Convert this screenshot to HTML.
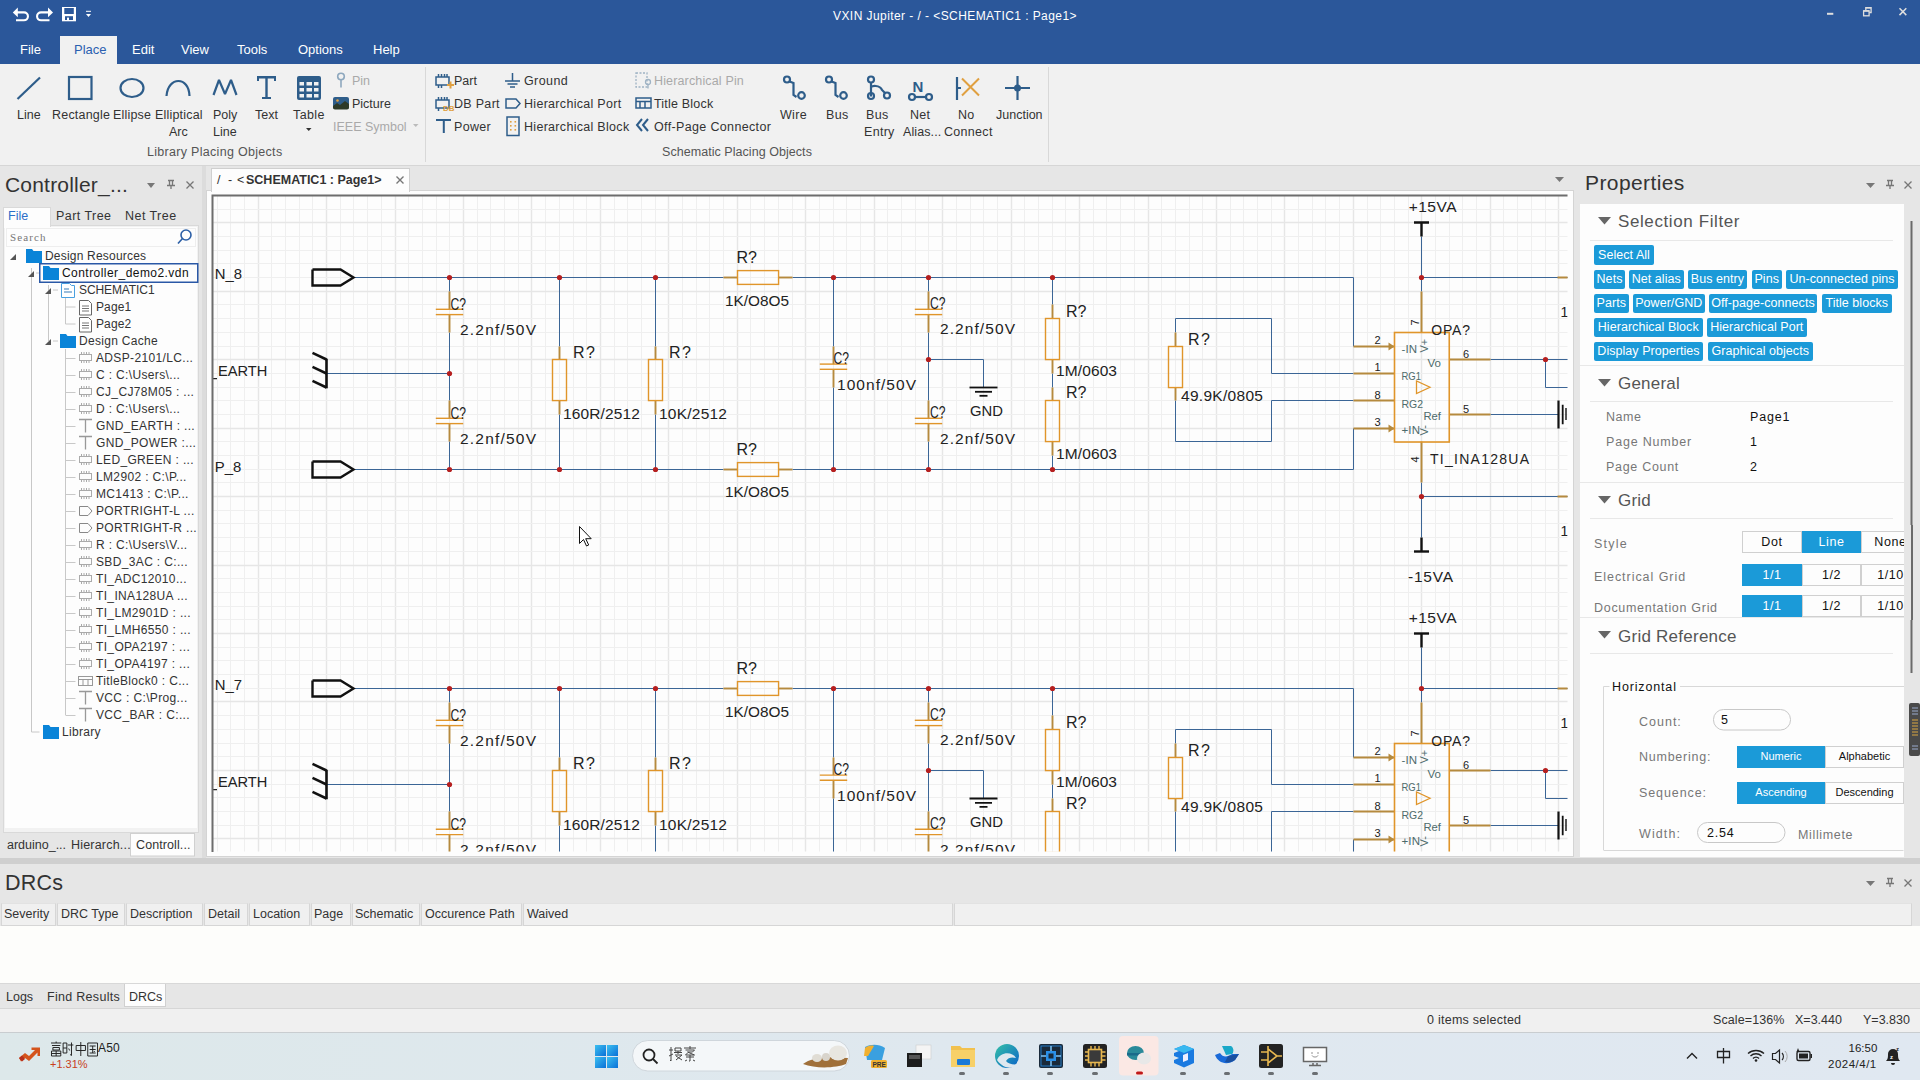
<!DOCTYPE html>
<html><head><meta charset="utf-8">
<style>
*{margin:0;padding:0;box-sizing:border-box}
html,body{width:1920px;height:1080px;overflow:hidden;background:#f0f0f0;font-family:"Liberation Sans",sans-serif;color:#222}
.a{position:absolute;white-space:nowrap}
#title{left:0;top:0;width:1920px;height:64px;background:#2b579a}
#ribbon{left:0;top:64px;width:1920px;height:102px;background:#f1f1f1;border-bottom:1px solid #d6d6d6}
#lp{left:0;top:166px;width:202px;height:692px;background:#e6e6e6}
#dp{left:202px;top:166px;width:1378px;height:692px;background:#e6e6e6}
#rp{left:1576px;top:166px;width:344px;height:692px;background:#e6e6e6}
#drc{left:0;top:863px;width:1920px;height:145px;background:#e6e6e6}
#status{left:0;top:1008px;width:1920px;height:24px;background:#f0f0f0}
#task{left:0;top:1032px;width:1920px;height:48px;background:#dde8f0}
</style></head><body>
<div id="title" class="a">
<svg class="a" style="left:0;top:0" width="120" height="32" viewBox="0 0 120 32">
 <g fill="none" stroke="#fff" stroke-width="2.1">
  <path d="M17 12.4H24A3.95 3.95 0 0 1 24 20.3H16"/>
  <path d="M48.5 12.4H41A3.95 3.95 0 0 0 41 20.3H49.5"/>
 </g>
 <path d="M12.8 12.4L17.8 7.6V17.2z" fill="#fff"/>
 <path d="M53 12.4L48 7.6V17.2z" fill="#fff"/>
 <rect x="62" y="7" width="14" height="14.3" fill="#fff"/>
 <rect x="64.3" y="8" width="9.5" height="6" fill="#2b579a"/>
 <rect x="65" y="16.2" width="8" height="3.8" fill="#2b579a"/>
 <rect x="67" y="17.6" width="2" height="2.4" fill="#fff"/>
 <rect x="86" y="10.8" width="5" height="1" fill="#fff"/>
 <path d="M86 14h5l-2.5 3z" fill="#fff"/>
</svg>
<div class="a" style="left:833px;top:8px;font-size:12px;letter-spacing:0.43px;color:#fff;line-height:16px">VXIN Jupiter - / - &lt;SCHEMATIC1 : Page1&gt;</div>
<svg class="a" style="left:1810px;top:0" width="110" height="32" viewBox="1810 0 110 32">
 <rect x="1827" y="12.8" width="6.3" height="2" fill="#dedede"/>
 <g fill="none" stroke="#dedede" stroke-width="1.3">
  <rect x="1863.6" y="10.8" width="5.5" height="5"/>
  <path d="M1865.8 10.5V7.6h5.3v4.9h-1.8"/>
  <path d="M1899.5 8.3l6.8 6.8M1906.3 8.3l-6.8 6.8" stroke-width="1.5"/>
 </g>
 <rect x="1865.8" y="7" width="5.3" height="1.6" fill="#dedede"/>
 <rect x="1863.6" y="10.2" width="5.5" height="1.5" fill="#dedede"/>
</svg>
<div class="a" style="left:60px;top:36px;width:57px;height:28px;background:#f1f1f1"></div>
<div class="a" style="left:20px;top:42px;font-size:13px;line-height:16px;color:#fff">File</div>
<div class="a" style="left:74px;top:42px;font-size:13px;line-height:16px;color:#2b5fb0">Place</div>
<div class="a" style="left:132px;top:42px;font-size:13px;line-height:16px;color:#fff">Edit</div>
<div class="a" style="left:181px;top:42px;font-size:13px;line-height:16px;color:#fff">View</div>
<div class="a" style="left:237px;top:42px;font-size:13px;line-height:16px;color:#fff">Tools</div>
<div class="a" style="left:298px;top:42px;font-size:13px;line-height:16px;color:#fff">Options</div>
<div class="a" style="left:373px;top:42px;font-size:13px;line-height:16px;color:#fff">Help</div>
</div>
<div id="ribbon" class="a">
<style>
.rl{position:absolute;font-size:12.5px;line-height:15px;color:#333;white-space:nowrap}
.rg{color:#a9a9a9}
.gl{position:absolute;font-size:12.5px;line-height:15px;color:#555;white-space:nowrap;letter-spacing:0.3px}
</style>
<svg class="a" style="left:0;top:0" width="1060" height="102" viewBox="0 64 1060 102">
 <g fill="none" stroke="#2e5d8a" stroke-width="2.2">
  <path d="M17.5 99 L40 77.5"/>
  <rect x="69" y="77" width="22.5" height="22"/>
  <ellipse cx="132" cy="88" rx="11.5" ry="9"/>
  <path d="M166.5 96 C168 76 189 76 189.5 96"/>
  <path d="M213.5 95 L219 80 L225 94 L231 80 L236.5 95" stroke-linejoin="bevel"/>
 </g>
 <g fill="#2e5d8a">
  <rect x="257" y="76" width="19" height="2.5"/>
  <rect x="257" y="76" width="2" height="5"/><rect x="274" y="76" width="2" height="5"/>
  <rect x="265.3" y="76" width="2.4" height="23"/>
  <rect x="262" y="97" width="9" height="2"/>
  <rect x="297" y="76" width="24" height="24" rx="2"/>
  <path d="M306 128h5.5l-2.75 3z" fill="#333"/>
 </g>
 <g fill="#f1f1f1">
  <rect x="299.5" y="82" width="4.5" height="3.5"/><rect x="306.5" y="82" width="5.5" height="3.5"/><rect x="314" y="82" width="4.5" height="3.5"/>
  <rect x="299.5" y="88" width="4.5" height="3.5"/><rect x="306.5" y="88" width="5.5" height="3.5"/><rect x="314" y="88" width="4.5" height="3.5"/>
  <rect x="299.5" y="94" width="4.5" height="3.5"/><rect x="306.5" y="94" width="5.5" height="3.5"/><rect x="314" y="94" width="4.5" height="3.5"/>
 </g>
 <g fill="none" stroke="#8ea8be" stroke-width="1.6"><circle cx="341" cy="76.5" r="3.3"/><path d="M341 80v7.5"/></g>
 <rect x="333" y="97" width="16" height="12" rx="2" fill="#2e5d8a"/>
 <path d="M333 106 l4-3 3 2 5-4 4 3v3.5a2 2 0 0 1-2 2h-12a2 2 0 0 1-2-2z" fill="#2d3a28"/>
 <circle cx="337.5" cy="100.5" r="1.3" fill="#e0a040"/>
 <path d="M413 124h5.5l-2.75 3z" fill="#bbb"/>
 <rect x="425" y="67" width="1" height="95" fill="#d8d8d8"/>
 <rect x="1048" y="67" width="1" height="95" fill="#d8d8d8"/>
 <!-- Part -->
 <g fill="none" stroke="#2e5d8a" stroke-width="1.5">
  <rect x="436" y="77" width="13" height="8"/>
  <path d="M438.5 77v-3M441.5 77v-3M444.5 77v-3M447 77v-3M438.5 85v3M441.5 85v3"/>
  <rect x="436" y="100" width="13" height="8"/>
  <path d="M438.5 100v-3M441.5 100v-3M444.5 100v-3M447 100v-3M438.5 108v3"/>
 </g>
 <path d="M447 84h2.5v-2.5h2v2.5h2.5v2h-2.5v2.5h-2v-2.5h-2.5z" fill="#e0a040"/>
 <text x="443" y="110.5" font-size="8" font-weight="bold" fill="#e0a040" font-family="Liberation Sans">DB</text>
 <g fill="#2e5d8a"><rect x="436" y="119" width="15" height="2"/><rect x="442.8" y="119" width="2" height="14"/></g>
 <!-- Ground -->
 <g fill="none" stroke="#2e5d8a" stroke-width="1.5">
  <path d="M512.5 73v8M505 81h15M507.5 84h10M510 87h5"/>
  <path d="M506 99h10l4 4.5-4 4.5h-10z"/>
  <rect x="507" y="117" width="12" height="18.5"/>
 </g>
 <g fill="#e0a040"><rect x="510" y="121" width="1.6" height="1.6"/><rect x="514.5" y="121" width="1.6" height="1.6"/><rect x="510" y="125" width="1.6" height="1.6"/><rect x="514.5" y="125" width="1.6" height="1.6"/><rect x="510" y="129" width="1.6" height="1.6"/><rect x="514.5" y="129" width="1.6" height="1.6"/></g>
 <!-- Hier pin -->
 <g fill="none" stroke="#9fb3c4" stroke-width="1.3">
  <rect x="636" y="73" width="11" height="14" stroke-dasharray="2 1.5"/>
  <circle cx="648" cy="82" r="2.5"/><path d="M648 84.5v4"/>
 </g>
 <g fill="none" stroke="#2e5d8a" stroke-width="1.5">
  <rect x="636" y="98" width="15" height="10"/>
  <path d="M636 101.5h15M640 101.5v6.5M645 101.5v6.5"/>
  <path d="M642 119l-5 6 5 6M648 119l-5 6 5 6" stroke-width="2"/>
 </g>
 <!-- Wire etc -->
 <g fill="none" stroke="#2e5d8a" stroke-width="2.2">
  <circle cx="787" cy="79.5" r="3"/><path d="M789.5 81.5l4 1.5v12l3 2"/><circle cx="801.5" cy="95.5" r="3.3"/>
  <circle cx="829" cy="79.5" r="3"/><path d="M831.5 81.5l4 1.5v12l3 2"/><circle cx="843.5" cy="95.5" r="3.3"/>
  <circle cx="871" cy="79.5" r="3"/><path d="M871 82.5v14M871 88c0-3 9-3 11 2l3 3"/><circle cx="871" cy="96" r="3"/><circle cx="887" cy="95.5" r="3"/>
  <circle cx="912" cy="97" r="3"/><circle cx="929" cy="97" r="3"/><path d="M915 97h11"/>
  <path d="M1017.5 76v24M1005 88h25"/>
 </g>
 <text x="912.5" y="91.5" font-size="15" font-weight="bold" fill="#2e5d8a" font-family="Liberation Sans">N</text>
 <path d="M957 77v23" stroke="#2e5d8a" stroke-width="2.2"/>
 <path d="M957 88h4" stroke="#2e5d8a" stroke-width="2"/>
 <path d="M962 78.5l17 17M979 78.5l-17 17" stroke="#e0a040" stroke-width="2"/>
 <circle cx="1017.5" cy="88" r="3.5" fill="#2e5d8a"/>
</svg>
<div class="rl" style="left:17px;top:44px">Line</div>
<div class="rl" style="left:52px;top:44px;letter-spacing:0.2px">Rectangle</div>
<div class="rl" style="left:113px;top:44px;letter-spacing:0.2px">Ellipse</div>
<div class="rl" style="left:155px;top:44px;letter-spacing:0.2px">Elliptical</div>
<div class="rl" style="left:169px;top:61px">Arc</div>
<div class="rl" style="left:213px;top:44px">Poly</div>
<div class="rl" style="left:213px;top:61px">Line</div>
<div class="rl" style="left:255px;top:44px">Text</div>
<div class="rl" style="left:293px;top:44px;letter-spacing:0.4px">Table</div>
<div class="rl rg" style="left:352px;top:10px">Pin</div>
<div class="rl" style="left:352px;top:33px">Picture</div>
<div class="rl rg" style="left:333px;top:56px">IEEE Symbol</div>
<div class="gl" style="left:147px;top:81px;letter-spacing:0.3px">Library Placing Objects</div>
<div class="rl" style="left:454px;top:10px">Part</div>
<div class="rl" style="left:454px;top:33px;letter-spacing:0.3px">DB Part</div>
<div class="rl" style="left:454px;top:56px;letter-spacing:0.3px">Power</div>
<div class="rl" style="left:524px;top:10px;letter-spacing:0.4px">Ground</div>
<div class="rl" style="left:524px;top:33px;letter-spacing:0.3px">Hierarchical Port</div>
<div class="rl" style="left:524px;top:56px;letter-spacing:0.3px">Hierarchical Block</div>
<div class="rl rg" style="left:654px;top:10px;letter-spacing:0.15px">Hierarchical Pin</div>
<div class="rl" style="left:654px;top:33px;letter-spacing:0.2px">Title Block</div>
<div class="rl" style="left:654px;top:56px;letter-spacing:0.35px">Off-Page Connector</div>
<div class="rl" style="left:780px;top:44px;letter-spacing:0.3px">Wire</div>
<div class="rl" style="left:826px;top:44px;letter-spacing:0.3px">Bus</div>
<div class="rl" style="left:866px;top:44px;letter-spacing:0.3px">Bus</div>
<div class="rl" style="left:864px;top:61px;letter-spacing:0.3px">Entry</div>
<div class="rl" style="left:910px;top:44px;letter-spacing:0.3px">Net</div>
<div class="rl" style="left:903px;top:61px;letter-spacing:0.1px">Alias...</div>
<div class="rl" style="left:958px;top:44px;letter-spacing:0.3px">No</div>
<div class="rl" style="left:944px;top:61px;letter-spacing:0.3px">Connect</div>
<div class="rl" style="left:996px;top:44px">Junction</div>
<div class="gl" style="left:662px;top:81px;letter-spacing:0.05px">Schematic Placing Objects</div>
</div>
<div id="lp" class="a">
<style>.tr{position:absolute;font-size:12px;line-height:14px;letter-spacing:0.35px;color:#333;white-space:nowrap}</style>
<div class="a" style="left:0;top:-166px;width:1px;height:1px">
<div class="a" style="left:5px;top:172px;font-size:21px;line-height:26px;color:#333;letter-spacing:0.2px">Controller_...</div>
<svg class="a" style="left:0;top:166px" width="202" height="696" viewBox="0 166 202 696">
 <path d="M147 183h8l-4 5z" fill="#777"/>
 <g fill="none" stroke="#777" stroke-width="1.3"><path d="M168 180.5h6M169.5 180.5v5h3v-5M167 185.5h8M171 185.5v3.5"/><path d="M186.5 181.5l7 7M193.5 181.5l-7 7"/></g>
 <rect x="3.5" y="225.5" width="195" height="607" fill="#f2f2f2" stroke="#d9d9d9"/>
 <rect x="5" y="227" width="192" height="601" fill="#fdfdfd"/>
 <rect x="3.5" y="207.5" width="47" height="19" fill="#fdfdfd" stroke="#d9d9d9"/>
 <rect x="4" y="225" width="46" height="3" fill="#fdfdfd"/>
 <rect x="6.5" y="228.5" width="189" height="18" fill="#fdfdfd" stroke="#eeeeee"/>
 <g fill="none" stroke="#2c5fa6" stroke-width="1.6"><circle cx="186" cy="235" r="5"/><path d="M182.5 238.5l-4.5 5"/></g>
 <rect x="39.75" y="263.75" width="158" height="18.5" fill="none" stroke="#2a58a6" stroke-width="1.5"/>
 <g stroke="#c8c8c8" stroke-width="1" fill="none"><path d="M31.5 268v464M31.5 732h8"/><path d="M48.5 285v56"/><path d="M65.5 297v27h10M65.5 307h10"/><path d="M65.5 349v366"/><path d="M65.5 358.5h10"/><path d="M65.5 375.5h10"/><path d="M65.5 392.5h10"/><path d="M65.5 409.5h10"/><path d="M65.5 426.5h10"/><path d="M65.5 443.5h10"/><path d="M65.5 460.5h10"/><path d="M65.5 477.5h10"/><path d="M65.5 494.5h10"/><path d="M65.5 511.5h10"/><path d="M65.5 528.5h10"/><path d="M65.5 545.5h10"/><path d="M65.5 562.5h10"/><path d="M65.5 579.5h10"/><path d="M65.5 596.5h10"/><path d="M65.5 613.5h10"/><path d="M65.5 630.5h10"/><path d="M65.5 647.5h10"/><path d="M65.5 664.5h10"/><path d="M65.5 681.5h10"/><path d="M65.5 698.5h10"/><path d="M65.5 715.5h10"/><path d="M36 273h3M53 290h5M53 341h5"/></g><path d="M16 254v6h-6z" fill="#555"/><path d="M34 271v6h-6z" fill="#555"/><path d="M51 288v6h-6z" fill="#555"/><path d="M51 339v6h-6z" fill="#555"/><path d="M26 249h6l1.5 2h8.5v12h-16z" fill="#0a84d8"/><path d="M43 266h6l1.5 2h8.5v12h-16z" fill="#0a84d8"/><path d="M60 334h6l1.5 2h8.5v12h-16z" fill="#0a84d8"/><path d="M43 725h6l1.5 2h8.5v12h-16z" fill="#0a84d8"/><path d="M61.5 283.5h8l2 2h3v12h-13z" fill="#fff" stroke="#4aa0e0" stroke-width="1"/><path d="M64 289h5M64 292h8" stroke="#7aa8d0" stroke-width="1.3"/><path d="M79.5 300.5h9l3 3v11.5h-12z" fill="#fff" stroke="#666" stroke-width="1"/><path d="M82 306h7M82 308.5h7M82 311h7" stroke="#666" stroke-width="0.9"/><path d="M79.5 317.5h9l3 3v11.5h-12z" fill="#fff" stroke="#666" stroke-width="1"/><path d="M82 323h7M82 325.5h7M82 328h7" stroke="#666" stroke-width="0.9"/><g stroke="#aaa" stroke-width="1" fill="none"><rect x="79.5" y="354.5" width="12" height="6"/><path d="M81.5 354.5v-2.5M84 354.5v-2.5M86.5 354.5v-2.5M89 354.5v-2.5M81.5 360.5v2.5M84 360.5v2.5M86.5 360.5v2.5M89 360.5v2.5"/></g><g stroke="#aaa" stroke-width="1" fill="none"><rect x="79.5" y="371.5" width="12" height="6"/><path d="M81.5 371.5v-2.5M84 371.5v-2.5M86.5 371.5v-2.5M89 371.5v-2.5M81.5 377.5v2.5M84 377.5v2.5M86.5 377.5v2.5M89 377.5v2.5"/></g><g stroke="#aaa" stroke-width="1" fill="none"><rect x="79.5" y="388.5" width="12" height="6"/><path d="M81.5 388.5v-2.5M84 388.5v-2.5M86.5 388.5v-2.5M89 388.5v-2.5M81.5 394.5v2.5M84 394.5v2.5M86.5 394.5v2.5M89 394.5v2.5"/></g><g stroke="#aaa" stroke-width="1" fill="none"><rect x="79.5" y="405.5" width="12" height="6"/><path d="M81.5 405.5v-2.5M84 405.5v-2.5M86.5 405.5v-2.5M89 405.5v-2.5M81.5 411.5v2.5M84 411.5v2.5M86.5 411.5v2.5M89 411.5v2.5"/></g><path d="M79 419.5h13M85.5 419.5v13" stroke="#999" stroke-width="1.3" fill="none"/><path d="M79 436.5h13M85.5 436.5v13" stroke="#999" stroke-width="1.3" fill="none"/><g stroke="#aaa" stroke-width="1" fill="none"><rect x="79.5" y="456.5" width="12" height="6"/><path d="M81.5 456.5v-2.5M84 456.5v-2.5M86.5 456.5v-2.5M89 456.5v-2.5M81.5 462.5v2.5M84 462.5v2.5M86.5 462.5v2.5M89 462.5v2.5"/></g><g stroke="#aaa" stroke-width="1" fill="none"><rect x="79.5" y="473.5" width="12" height="6"/><path d="M81.5 473.5v-2.5M84 473.5v-2.5M86.5 473.5v-2.5M89 473.5v-2.5M81.5 479.5v2.5M84 479.5v2.5M86.5 479.5v2.5M89 479.5v2.5"/></g><g stroke="#aaa" stroke-width="1" fill="none"><rect x="79.5" y="490.5" width="12" height="6"/><path d="M81.5 490.5v-2.5M84 490.5v-2.5M86.5 490.5v-2.5M89 490.5v-2.5M81.5 496.5v2.5M84 496.5v2.5M86.5 496.5v2.5M89 496.5v2.5"/></g><path d="M79.5 506.5h8.5l4 4.5-4 4.5h-8.5z" stroke="#888" stroke-width="1" fill="none"/><path d="M79.5 523.5h8.5l4 4.5-4 4.5h-8.5z" stroke="#888" stroke-width="1" fill="none"/><g stroke="#aaa" stroke-width="1" fill="none"><rect x="79.5" y="541.5" width="12" height="6"/><path d="M81.5 541.5v-2.5M84 541.5v-2.5M86.5 541.5v-2.5M89 541.5v-2.5M81.5 547.5v2.5M84 547.5v2.5M86.5 547.5v2.5M89 547.5v2.5"/></g><g stroke="#aaa" stroke-width="1" fill="none"><rect x="79.5" y="558.5" width="12" height="6"/><path d="M81.5 558.5v-2.5M84 558.5v-2.5M86.5 558.5v-2.5M89 558.5v-2.5M81.5 564.5v2.5M84 564.5v2.5M86.5 564.5v2.5M89 564.5v2.5"/></g><g stroke="#aaa" stroke-width="1" fill="none"><rect x="79.5" y="575.5" width="12" height="6"/><path d="M81.5 575.5v-2.5M84 575.5v-2.5M86.5 575.5v-2.5M89 575.5v-2.5M81.5 581.5v2.5M84 581.5v2.5M86.5 581.5v2.5M89 581.5v2.5"/></g><g stroke="#aaa" stroke-width="1" fill="none"><rect x="79.5" y="592.5" width="12" height="6"/><path d="M81.5 592.5v-2.5M84 592.5v-2.5M86.5 592.5v-2.5M89 592.5v-2.5M81.5 598.5v2.5M84 598.5v2.5M86.5 598.5v2.5M89 598.5v2.5"/></g><g stroke="#aaa" stroke-width="1" fill="none"><rect x="79.5" y="609.5" width="12" height="6"/><path d="M81.5 609.5v-2.5M84 609.5v-2.5M86.5 609.5v-2.5M89 609.5v-2.5M81.5 615.5v2.5M84 615.5v2.5M86.5 615.5v2.5M89 615.5v2.5"/></g><g stroke="#aaa" stroke-width="1" fill="none"><rect x="79.5" y="626.5" width="12" height="6"/><path d="M81.5 626.5v-2.5M84 626.5v-2.5M86.5 626.5v-2.5M89 626.5v-2.5M81.5 632.5v2.5M84 632.5v2.5M86.5 632.5v2.5M89 632.5v2.5"/></g><g stroke="#aaa" stroke-width="1" fill="none"><rect x="79.5" y="643.5" width="12" height="6"/><path d="M81.5 643.5v-2.5M84 643.5v-2.5M86.5 643.5v-2.5M89 643.5v-2.5M81.5 649.5v2.5M84 649.5v2.5M86.5 649.5v2.5M89 649.5v2.5"/></g><g stroke="#aaa" stroke-width="1" fill="none"><rect x="79.5" y="660.5" width="12" height="6"/><path d="M81.5 660.5v-2.5M84 660.5v-2.5M86.5 660.5v-2.5M89 660.5v-2.5M81.5 666.5v2.5M84 666.5v2.5M86.5 666.5v2.5M89 666.5v2.5"/></g><g stroke="#999" stroke-width="1" fill="none"><rect x="78.5" y="676.5" width="14" height="9"/><path d="M78.5 679.5h14M83 679.5v6M88 679.5v6"/></g><path d="M79 691.5h13M85.5 691.5v13" stroke="#999" stroke-width="1.3" fill="none"/><path d="M79 708.5h13M85.5 708.5v13" stroke="#999" stroke-width="1.3" fill="none"/>
 <rect x="130.5" y="833.5" width="64" height="22.5" fill="#fdfdfd" stroke="#d0d0d0"/>
</svg>
<div class="a" style="left:8px;top:208px;font-size:12.5px;line-height:16px;color:#2b6fc8">File</div>
<div class="a" style="left:56px;top:208px;font-size:12.5px;line-height:16px;color:#333;letter-spacing:0.45px">Part Tree</div>
<div class="a" style="left:125px;top:208px;font-size:12.5px;line-height:16px;color:#333;letter-spacing:0.45px">Net Tree</div>
<div class="a" style="left:10px;top:230px;font-size:11px;line-height:14px;color:#777;letter-spacing:1.1px;font-family:'Liberation Serif',serif">Search</div>
<div class="tr" style="left:45px;top:249px;letter-spacing:0.2px">Design Resources</div>
<div class="tr" style="left:62px;top:266px;color:#111;letter-spacing:0.45px">Controller_demo2.vdn</div>
<div class="tr" style="left:79px;top:283px;letter-spacing:-0.1px">SCHEMATIC1</div>
<div class="tr" style="left:96px;top:300px;letter-spacing:0.1px">Page1</div>
<div class="tr" style="left:96px;top:317px;letter-spacing:0.1px">Page2</div>
<div class="tr" style="left:79px;top:334px;letter-spacing:0.3px">Design Cache</div>
<div class="tr" style="left:96px;top:351px">ADSP-2101/LC...</div><div class="tr" style="left:96px;top:368px">C : C:\Users\...</div><div class="tr" style="left:96px;top:385px">CJ_CJ78M05 : ...</div><div class="tr" style="left:96px;top:402px">D : C:\Users\...</div><div class="tr" style="left:96px;top:419px">GND_EARTH : ...</div><div class="tr" style="left:96px;top:436px">GND_POWER :...</div><div class="tr" style="left:96px;top:453px">LED_GREEN : ...</div><div class="tr" style="left:96px;top:470px">LM2902 : C:\P...</div><div class="tr" style="left:96px;top:487px">MC1413 : C:\P...</div><div class="tr" style="left:96px;top:504px">PORTRIGHT-L ...</div><div class="tr" style="left:96px;top:521px">PORTRIGHT-R ...</div><div class="tr" style="left:96px;top:538px">R : C:\Users\V...</div><div class="tr" style="left:96px;top:555px">SBD_3AC : C:...</div><div class="tr" style="left:96px;top:572px">TI_ADC12010...</div><div class="tr" style="left:96px;top:589px">TI_INA128UA ...</div><div class="tr" style="left:96px;top:606px">TI_LM2901D : ...</div><div class="tr" style="left:96px;top:623px">TI_LMH6550 : ...</div><div class="tr" style="left:96px;top:640px">TI_OPA2197 : ...</div><div class="tr" style="left:96px;top:657px">TI_OPA4197 : ...</div><div class="tr" style="left:96px;top:674px">TitleBlock0 : C...</div><div class="tr" style="left:96px;top:691px">VCC : C:\Prog...</div><div class="tr" style="left:96px;top:708px">VCC_BAR : C:...</div>
<div class="tr" style="left:62px;top:725px;letter-spacing:0.3px">Library</div>
<div class="a" style="left:7px;top:837px;font-size:12.5px;line-height:16px;color:#333">arduino_...</div>
<div class="a" style="left:71px;top:837px;font-size:12.5px;line-height:16px;color:#333;letter-spacing:0.2px">Hierarch...</div>
<div class="a" style="left:136px;top:837px;font-size:12.5px;line-height:16px;color:#333;letter-spacing:0.1px">Controll...</div>
</div></div>
<div id="dp" class="a"></div>
<div class="a" style="left:202px;top:166px;width:4px;height:692px;background:#dcdcdc"></div>
<div class="a" style="left:1576px;top:166px;width:4px;height:692px;background:#dcdcdc"></div>
<div class="a" style="left:206px;top:190px;width:1368px;height:667px;background:#fdfdfd;border:1px solid #d4d4d4"></div>
<div class="a" style="left:211px;top:168px;width:199px;height:24px;background:#fdfdfd;border:1px solid #cfcfcf;border-bottom:none"></div>
<div class="a" style="left:217px;top:172px;font-size:12.5px;line-height:16px;color:#333">/</div><div class="a" style="left:228px;top:172px;font-size:12.5px;line-height:16px;color:#333">-</div><div class="a" style="left:237px;top:172px;font-size:12.5px;line-height:16px;color:#333">&lt;</div><div class="a" style="left:246px;top:172px;font-size:12.5px;line-height:16px;color:#333;font-weight:bold;letter-spacing:0px">SCHEMATIC1 : Page1&gt;</div>
<svg class="a" style="left:0;top:0" width="1600" height="200">
 <path d="M396.5 176.5l7 7M403.5 176.5l-7 7" stroke="#777" stroke-width="1.4"/>
 <path d="M1555 177h9l-4.5 5z" fill="#777"/>
</svg>
<!--CANVAS--><svg class="a" style="left:0;top:0" width="1920" height="1080" viewBox="0 0 1920 1080" font-family="Liberation Sans">
<defs><clipPath id="cv"><rect x="212.5" y="195.5" width="1355" height="656"/></clipPath></defs>
<rect x="212" y="195" width="1356" height="657" fill="#fdfdfd"/>
<g clip-path="url(#cv)"><path d="M217.50 195V852" stroke="#efefef" stroke-width="1"/><path d="M230.50 195V852" stroke="#efefef" stroke-width="1"/><path d="M244.50 195V852" stroke="#efefef" stroke-width="1"/><path d="M258.50 195V852" stroke="#e6e6e6" stroke-width="1.4"/><path d="M271.50 195V852" stroke="#efefef" stroke-width="1"/><path d="M285.50 195V852" stroke="#efefef" stroke-width="1"/><path d="M299.50 195V852" stroke="#efefef" stroke-width="1"/><path d="M312.50 195V852" stroke="#efefef" stroke-width="1"/><path d="M326.50 195V852" stroke="#e6e6e6" stroke-width="1.4"/><path d="M340.50 195V852" stroke="#efefef" stroke-width="1"/><path d="M353.50 195V852" stroke="#efefef" stroke-width="1"/><path d="M367.50 195V852" stroke="#efefef" stroke-width="1"/><path d="M381.50 195V852" stroke="#efefef" stroke-width="1"/><path d="M395.50 195V852" stroke="#e6e6e6" stroke-width="1.4"/><path d="M408.50 195V852" stroke="#efefef" stroke-width="1"/><path d="M422.50 195V852" stroke="#efefef" stroke-width="1"/><path d="M436.50 195V852" stroke="#efefef" stroke-width="1"/><path d="M449.50 195V852" stroke="#efefef" stroke-width="1"/><path d="M463.50 195V852" stroke="#e6e6e6" stroke-width="1.4"/><path d="M477.50 195V852" stroke="#efefef" stroke-width="1"/><path d="M490.50 195V852" stroke="#efefef" stroke-width="1"/><path d="M504.50 195V852" stroke="#efefef" stroke-width="1"/><path d="M518.50 195V852" stroke="#efefef" stroke-width="1"/><path d="M531.50 195V852" stroke="#e6e6e6" stroke-width="1.4"/><path d="M545.50 195V852" stroke="#efefef" stroke-width="1"/><path d="M559.50 195V852" stroke="#efefef" stroke-width="1"/><path d="M573.50 195V852" stroke="#efefef" stroke-width="1"/><path d="M586.50 195V852" stroke="#efefef" stroke-width="1"/><path d="M600.50 195V852" stroke="#e6e6e6" stroke-width="1.4"/><path d="M614.50 195V852" stroke="#efefef" stroke-width="1"/><path d="M627.50 195V852" stroke="#efefef" stroke-width="1"/><path d="M641.50 195V852" stroke="#efefef" stroke-width="1"/><path d="M655.50 195V852" stroke="#efefef" stroke-width="1"/><path d="M668.50 195V852" stroke="#e6e6e6" stroke-width="1.4"/><path d="M682.50 195V852" stroke="#efefef" stroke-width="1"/><path d="M696.50 195V852" stroke="#efefef" stroke-width="1"/><path d="M709.50 195V852" stroke="#efefef" stroke-width="1"/><path d="M723.50 195V852" stroke="#efefef" stroke-width="1"/><path d="M737.50 195V852" stroke="#e6e6e6" stroke-width="1.4"/><path d="M750.50 195V852" stroke="#efefef" stroke-width="1"/><path d="M764.50 195V852" stroke="#efefef" stroke-width="1"/><path d="M778.50 195V852" stroke="#efefef" stroke-width="1"/><path d="M792.50 195V852" stroke="#efefef" stroke-width="1"/><path d="M805.50 195V852" stroke="#e6e6e6" stroke-width="1.4"/><path d="M819.50 195V852" stroke="#efefef" stroke-width="1"/><path d="M833.50 195V852" stroke="#efefef" stroke-width="1"/><path d="M846.50 195V852" stroke="#efefef" stroke-width="1"/><path d="M860.50 195V852" stroke="#efefef" stroke-width="1"/><path d="M874.50 195V852" stroke="#e6e6e6" stroke-width="1.4"/><path d="M887.50 195V852" stroke="#efefef" stroke-width="1"/><path d="M901.50 195V852" stroke="#efefef" stroke-width="1"/><path d="M915.50 195V852" stroke="#efefef" stroke-width="1"/><path d="M928.50 195V852" stroke="#efefef" stroke-width="1"/><path d="M942.50 195V852" stroke="#e6e6e6" stroke-width="1.4"/><path d="M956.50 195V852" stroke="#efefef" stroke-width="1"/><path d="M970.50 195V852" stroke="#efefef" stroke-width="1"/><path d="M983.50 195V852" stroke="#efefef" stroke-width="1"/><path d="M997.50 195V852" stroke="#efefef" stroke-width="1"/><path d="M1011.50 195V852" stroke="#e6e6e6" stroke-width="1.4"/><path d="M1024.50 195V852" stroke="#efefef" stroke-width="1"/><path d="M1038.50 195V852" stroke="#efefef" stroke-width="1"/><path d="M1052.50 195V852" stroke="#efefef" stroke-width="1"/><path d="M1065.50 195V852" stroke="#efefef" stroke-width="1"/><path d="M1079.50 195V852" stroke="#e6e6e6" stroke-width="1.4"/><path d="M1093.50 195V852" stroke="#efefef" stroke-width="1"/><path d="M1106.50 195V852" stroke="#efefef" stroke-width="1"/><path d="M1120.50 195V852" stroke="#efefef" stroke-width="1"/><path d="M1134.50 195V852" stroke="#efefef" stroke-width="1"/><path d="M1148.50 195V852" stroke="#e6e6e6" stroke-width="1.4"/><path d="M1161.50 195V852" stroke="#efefef" stroke-width="1"/><path d="M1175.50 195V852" stroke="#efefef" stroke-width="1"/><path d="M1189.50 195V852" stroke="#efefef" stroke-width="1"/><path d="M1202.50 195V852" stroke="#efefef" stroke-width="1"/><path d="M1216.50 195V852" stroke="#e6e6e6" stroke-width="1.4"/><path d="M1230.50 195V852" stroke="#efefef" stroke-width="1"/><path d="M1243.50 195V852" stroke="#efefef" stroke-width="1"/><path d="M1257.50 195V852" stroke="#efefef" stroke-width="1"/><path d="M1271.50 195V852" stroke="#efefef" stroke-width="1"/><path d="M1284.50 195V852" stroke="#e6e6e6" stroke-width="1.4"/><path d="M1298.50 195V852" stroke="#efefef" stroke-width="1"/><path d="M1312.50 195V852" stroke="#efefef" stroke-width="1"/><path d="M1325.50 195V852" stroke="#efefef" stroke-width="1"/><path d="M1339.50 195V852" stroke="#efefef" stroke-width="1"/><path d="M1353.50 195V852" stroke="#e6e6e6" stroke-width="1.4"/><path d="M1367.50 195V852" stroke="#efefef" stroke-width="1"/><path d="M1380.50 195V852" stroke="#efefef" stroke-width="1"/><path d="M1394.50 195V852" stroke="#efefef" stroke-width="1"/><path d="M1408.50 195V852" stroke="#efefef" stroke-width="1"/><path d="M1421.50 195V852" stroke="#e6e6e6" stroke-width="1.4"/><path d="M1435.50 195V852" stroke="#efefef" stroke-width="1"/><path d="M1449.50 195V852" stroke="#efefef" stroke-width="1"/><path d="M1462.50 195V852" stroke="#efefef" stroke-width="1"/><path d="M1476.50 195V852" stroke="#efefef" stroke-width="1"/><path d="M1490.50 195V852" stroke="#e6e6e6" stroke-width="1.4"/><path d="M1503.50 195V852" stroke="#efefef" stroke-width="1"/><path d="M1517.50 195V852" stroke="#efefef" stroke-width="1"/><path d="M1531.50 195V852" stroke="#efefef" stroke-width="1"/><path d="M1545.50 195V852" stroke="#efefef" stroke-width="1"/><path d="M1558.50 195V852" stroke="#e6e6e6" stroke-width="1.4"/><path d="M212 195.50H1568" stroke="#efefef" stroke-width="1"/><path d="M212 209.50H1568" stroke="#efefef" stroke-width="1"/><path d="M212 222.50H1568" stroke="#e6e6e6" stroke-width="1.4"/><path d="M212 236.50H1568" stroke="#efefef" stroke-width="1"/><path d="M212 250.50H1568" stroke="#efefef" stroke-width="1"/><path d="M212 263.50H1568" stroke="#efefef" stroke-width="1"/><path d="M212 277.50H1568" stroke="#efefef" stroke-width="1"/><path d="M212 291.50H1568" stroke="#e6e6e6" stroke-width="1.4"/><path d="M212 304.50H1568" stroke="#efefef" stroke-width="1"/><path d="M212 318.50H1568" stroke="#efefef" stroke-width="1"/><path d="M212 332.50H1568" stroke="#efefef" stroke-width="1"/><path d="M212 346.50H1568" stroke="#efefef" stroke-width="1"/><path d="M212 359.50H1568" stroke="#e6e6e6" stroke-width="1.4"/><path d="M212 373.50H1568" stroke="#efefef" stroke-width="1"/><path d="M212 387.50H1568" stroke="#efefef" stroke-width="1"/><path d="M212 400.50H1568" stroke="#efefef" stroke-width="1"/><path d="M212 414.50H1568" stroke="#efefef" stroke-width="1"/><path d="M212 428.50H1568" stroke="#e6e6e6" stroke-width="1.4"/><path d="M212 441.50H1568" stroke="#efefef" stroke-width="1"/><path d="M212 455.50H1568" stroke="#efefef" stroke-width="1"/><path d="M212 469.50H1568" stroke="#efefef" stroke-width="1"/><path d="M212 482.50H1568" stroke="#efefef" stroke-width="1"/><path d="M212 496.50H1568" stroke="#e6e6e6" stroke-width="1.4"/><path d="M212 510.50H1568" stroke="#efefef" stroke-width="1"/><path d="M212 523.50H1568" stroke="#efefef" stroke-width="1"/><path d="M212 537.50H1568" stroke="#efefef" stroke-width="1"/><path d="M212 551.50H1568" stroke="#efefef" stroke-width="1"/><path d="M212 565.50H1568" stroke="#e6e6e6" stroke-width="1.4"/><path d="M212 578.50H1568" stroke="#efefef" stroke-width="1"/><path d="M212 592.50H1568" stroke="#efefef" stroke-width="1"/><path d="M212 606.50H1568" stroke="#efefef" stroke-width="1"/><path d="M212 619.50H1568" stroke="#efefef" stroke-width="1"/><path d="M212 633.50H1568" stroke="#e6e6e6" stroke-width="1.4"/><path d="M212 647.50H1568" stroke="#efefef" stroke-width="1"/><path d="M212 660.50H1568" stroke="#efefef" stroke-width="1"/><path d="M212 674.50H1568" stroke="#efefef" stroke-width="1"/><path d="M212 688.50H1568" stroke="#efefef" stroke-width="1"/><path d="M212 701.50H1568" stroke="#e6e6e6" stroke-width="1.4"/><path d="M212 715.50H1568" stroke="#efefef" stroke-width="1"/><path d="M212 729.50H1568" stroke="#efefef" stroke-width="1"/><path d="M212 743.50H1568" stroke="#efefef" stroke-width="1"/><path d="M212 756.50H1568" stroke="#efefef" stroke-width="1"/><path d="M212 770.50H1568" stroke="#e6e6e6" stroke-width="1.4"/><path d="M212 784.50H1568" stroke="#efefef" stroke-width="1"/><path d="M212 797.50H1568" stroke="#efefef" stroke-width="1"/><path d="M212 811.50H1568" stroke="#efefef" stroke-width="1"/><path d="M212 825.50H1568" stroke="#efefef" stroke-width="1"/><path d="M212 838.50H1568" stroke="#e6e6e6" stroke-width="1.4"/><g transform="translate(0 0)"><path d="M353.50 277.50L723.50 277.50" stroke="#3b6596" stroke-width="1"/><path d="M792.50 277.50L1353.50 277.50" stroke="#3b6596" stroke-width="1"/><path d="M1353.50 277.50L1353.50 346.50" stroke="#3b6596" stroke-width="1" fill="none"/><path d="M353.50 469.50L723.50 469.50" stroke="#3b6596" stroke-width="1"/><path d="M792.50 469.50L1353.50 469.50" stroke="#3b6596" stroke-width="1"/><path d="M1353.50 469.50L1353.50 428.50" stroke="#3b6596" stroke-width="1" fill="none"/><path d="M326.50 373.50L449.50 373.50" stroke="#3b6596" stroke-width="1"/><path d="M449.50 277.50L449.50 291.50" stroke="#3b6596" stroke-width="1"/><path d="M449.50 332.50L449.50 400.50" stroke="#3b6596" stroke-width="1"/><path d="M449.50 441.50L449.50 469.50" stroke="#3b6596" stroke-width="1"/><path d="M928.50 277.50L928.50 291.50" stroke="#3b6596" stroke-width="1"/><path d="M928.50 332.50L928.50 400.50" stroke="#3b6596" stroke-width="1"/><path d="M928.50 441.50L928.50 469.50" stroke="#3b6596" stroke-width="1"/><path d="M559.50 277.50L559.50 346.50" stroke="#3b6596" stroke-width="1"/><path d="M559.50 414.50L559.50 469.50" stroke="#3b6596" stroke-width="1"/><path d="M655.50 277.50L655.50 346.50" stroke="#3b6596" stroke-width="1"/><path d="M655.50 414.50L655.50 469.50" stroke="#3b6596" stroke-width="1"/><path d="M833.50 277.50L833.50 346.50" stroke="#3b6596" stroke-width="1"/><path d="M833.50 387.50L833.50 469.50" stroke="#3b6596" stroke-width="1"/><path d="M928.50 359.50L983.50 359.50L983.50 387.50" stroke="#3b6596" stroke-width="1" fill="none"/><path d="M1052.50 277.50L1052.50 304.50" stroke="#3b6596" stroke-width="1"/><path d="M1052.50 373.50L1052.50 387.50" stroke="#3b6596" stroke-width="1"/><path d="M1052.50 455.50L1052.50 469.50" stroke="#3b6596" stroke-width="1"/><path d="M1175.50 332.50L1175.50 318.50L1271.50 318.50L1271.50 373.50L1353.50 373.50" stroke="#3b6596" stroke-width="1" fill="none"/><path d="M1175.50 400.50L1175.50 441.50L1271.50 441.50L1271.50 400.50L1353.50 400.50" stroke="#3b6596" stroke-width="1" fill="none"/><path d="M1421.50 236.50L1421.50 291.50" stroke="#3b6596" stroke-width="1"/><path d="M1421.50 482.50L1421.50 537.50" stroke="#3b6596" stroke-width="1"/><path d="M1421.50 277.50L1568.00 277.50" stroke="#3b6596" stroke-width="1"/><path d="M1421.50 496.50L1568.00 496.50" stroke="#3b6596" stroke-width="1"/><path d="M1490.50 359.50L1568.00 359.50" stroke="#3b6596" stroke-width="1"/><path d="M1545.50 359.50L1545.50 387.50L1568.00 387.50" stroke="#3b6596" stroke-width="1" fill="none"/><path d="M1490.50 414.50L1558.50 414.50" stroke="#3b6596" stroke-width="1"/><path d="M1557.50 277.50L1568.00 277.50" stroke="#b58a3e" stroke-width="1.9"/><path d="M1557.50 496.50L1568.00 496.50" stroke="#b58a3e" stroke-width="1.9"/><path d="M449.50 291.50L449.50 309.30" stroke="#b58a3e" stroke-width="1.9"/><path d="M449.50 314.60L449.50 332.50" stroke="#b58a3e" stroke-width="1.9"/><path d="M435.80 309.30L463.20 309.30" stroke="#e0952a" stroke-width="1.4"/><path d="M435.80 314.60L463.20 314.60" stroke="#e0952a" stroke-width="1.4"/><path d="M449.50 400.50L449.50 418.30" stroke="#b58a3e" stroke-width="1.9"/><path d="M449.50 423.60L449.50 441.50" stroke="#b58a3e" stroke-width="1.9"/><path d="M435.80 418.30L463.20 418.30" stroke="#e0952a" stroke-width="1.4"/><path d="M435.80 423.60L463.20 423.60" stroke="#e0952a" stroke-width="1.4"/><path d="M559.50 346.50L559.50 359.50" stroke="#b58a3e" stroke-width="1.9"/><path d="M559.50 400.50L559.50 414.50" stroke="#b58a3e" stroke-width="1.9"/><rect x="552.50" y="359.50" width="14" height="41.07" fill="none" stroke="#e0952a" stroke-width="1.4"/><path d="M655.50 346.50L655.50 359.50" stroke="#b58a3e" stroke-width="1.9"/><path d="M655.50 400.50L655.50 414.50" stroke="#b58a3e" stroke-width="1.9"/><rect x="648.50" y="359.50" width="14" height="41.07" fill="none" stroke="#e0952a" stroke-width="1.4"/><path d="M723.50 277.50L737.50 277.50" stroke="#b58a3e" stroke-width="1.9"/><path d="M778.50 277.50L792.50 277.50" stroke="#b58a3e" stroke-width="1.9"/><rect x="737.50" y="270.60" width="41.07" height="13.8" fill="none" stroke="#e0952a" stroke-width="1.4"/><path d="M723.50 469.50L737.50 469.50" stroke="#b58a3e" stroke-width="1.9"/><path d="M778.50 469.50L792.50 469.50" stroke="#b58a3e" stroke-width="1.9"/><rect x="737.50" y="462.60" width="41.07" height="13.8" fill="none" stroke="#e0952a" stroke-width="1.4"/><path d="M833.50 346.50L833.50 364.10" stroke="#b58a3e" stroke-width="1.9"/><path d="M833.50 369.30L833.50 387.50" stroke="#b58a3e" stroke-width="1.9"/><path d="M819.80 364.10L847.20 364.10" stroke="#e0952a" stroke-width="1.4"/><path d="M819.80 369.30L847.20 369.30" stroke="#e0952a" stroke-width="1.4"/><path d="M928.50 291.50L928.50 309.30" stroke="#b58a3e" stroke-width="1.9"/><path d="M928.50 314.60L928.50 332.50" stroke="#b58a3e" stroke-width="1.9"/><path d="M914.80 309.30L942.20 309.30" stroke="#e0952a" stroke-width="1.4"/><path d="M914.80 314.60L942.20 314.60" stroke="#e0952a" stroke-width="1.4"/><path d="M928.50 400.50L928.50 418.30" stroke="#b58a3e" stroke-width="1.9"/><path d="M928.50 423.60L928.50 441.50" stroke="#b58a3e" stroke-width="1.9"/><path d="M914.80 418.30L942.20 418.30" stroke="#e0952a" stroke-width="1.4"/><path d="M914.80 423.60L942.20 423.60" stroke="#e0952a" stroke-width="1.4"/><path d="M1052.50 304.50L1052.50 318.50" stroke="#b58a3e" stroke-width="1.9"/><path d="M1052.50 359.50L1052.50 373.50" stroke="#b58a3e" stroke-width="1.9"/><rect x="1045.50" y="318.50" width="14" height="41.07" fill="none" stroke="#e0952a" stroke-width="1.4"/><path d="M1052.50 387.50L1052.50 400.50" stroke="#b58a3e" stroke-width="1.9"/><path d="M1052.50 441.50L1052.50 455.50" stroke="#b58a3e" stroke-width="1.9"/><rect x="1045.50" y="400.50" width="14" height="41.07" fill="none" stroke="#e0952a" stroke-width="1.4"/><path d="M1175.50 332.50L1175.50 346.50" stroke="#b58a3e" stroke-width="1.9"/><path d="M1175.50 387.50L1175.50 400.50" stroke="#b58a3e" stroke-width="1.9"/><rect x="1168.50" y="346.50" width="14" height="41.07" fill="none" stroke="#e0952a" stroke-width="1.4"/><path d="M969.50 387.50L997.50 387.50" stroke="#111" stroke-width="1.8"/><path d="M975.00 391.80L992.00 391.80" stroke="#111" stroke-width="1.8"/><path d="M979.50 395.80L987.50 395.80" stroke="#111" stroke-width="1.8"/><path d="M326.50 358.70L326.50 388.30" stroke="#111" stroke-width="2.6"/><path d="M312.50 352.90L326.50 359.50" stroke="#111" stroke-width="2.6"/><path d="M312.50 366.90L326.50 373.50" stroke="#111" stroke-width="2.6"/><path d="M312.50 380.90L326.50 387.50" stroke="#111" stroke-width="2.6"/><path d="M312.50 269.50L340.50 269.50L353.50 277.50L340.50 285.50L312.50 285.50L312.50 269.50" stroke="#111" stroke-width="2.4" fill="none"/><path d="M312.50 461.50L340.50 461.50L353.50 469.50L340.50 477.50L312.50 477.50L312.50 461.50" stroke="#111" stroke-width="2.4" fill="none"/><path d="M1414.00 222.50L1429.00 222.50" stroke="#111" stroke-width="2.4"/><path d="M1421.50 222.50L1421.50 236.50" stroke="#111" stroke-width="2.4"/><path d="M1414.00 551.50L1429.00 551.50" stroke="#111" stroke-width="2.4"/><path d="M1421.50 537.50L1421.50 551.50" stroke="#111" stroke-width="2.4"/><path d="M1558.50 400.50L1558.50 428.50" stroke="#111" stroke-width="2.2"/><path d="M1562.70 404.80L1562.70 424.20" stroke="#111" stroke-width="1.8"/><path d="M1566.00 408.00L1566.00 420.00" stroke="#111" stroke-width="1.4"/><path d="M1353.50 346.50L1394.50 346.50" stroke="#b58a3e" stroke-width="2"/><path d="M1353.50 373.50L1394.50 373.50" stroke="#b58a3e" stroke-width="2"/><path d="M1353.50 400.50L1394.50 400.50" stroke="#b58a3e" stroke-width="2"/><path d="M1353.50 428.50L1394.50 428.50" stroke="#b58a3e" stroke-width="2"/><path d="M1388.50 342.50L1394.50 346.50L1388.50 350.50z" fill="#b58a3e"/><path d="M1388.50 424.50L1394.50 428.50L1388.50 432.50z" fill="#b58a3e"/><path d="M1421.50 291.50L1421.50 332.50" stroke="#b58a3e" stroke-width="2"/><path d="M1421.50 441.50L1421.50 482.50" stroke="#b58a3e" stroke-width="2"/><path d="M1449.50 359.50L1490.50 359.50" stroke="#b58a3e" stroke-width="2"/><path d="M1449.50 414.50L1490.50 414.50" stroke="#b58a3e" stroke-width="2"/><rect x="1394.50" y="332.50" width="54.76" height="109.52" fill="none" stroke="#e0952a" stroke-width="1.6"/><path d="M1416.5 381v12.5l13.5-6.25z" fill="none" stroke="#e0952a" stroke-width="1.3"/><circle cx="449.50" cy="277.50" r="2.6" fill="#b51f1f"/><circle cx="559.50" cy="277.50" r="2.6" fill="#b51f1f"/><circle cx="655.50" cy="277.50" r="2.6" fill="#b51f1f"/><circle cx="833.50" cy="277.50" r="2.6" fill="#b51f1f"/><circle cx="928.50" cy="277.50" r="2.6" fill="#b51f1f"/><circle cx="1052.50" cy="277.50" r="2.6" fill="#b51f1f"/><circle cx="449.50" cy="373.50" r="2.6" fill="#b51f1f"/><circle cx="928.50" cy="359.50" r="2.6" fill="#b51f1f"/><circle cx="449.50" cy="469.50" r="2.6" fill="#b51f1f"/><circle cx="559.50" cy="469.50" r="2.6" fill="#b51f1f"/><circle cx="655.50" cy="469.50" r="2.6" fill="#b51f1f"/><circle cx="833.50" cy="469.50" r="2.6" fill="#b51f1f"/><circle cx="928.50" cy="469.50" r="2.6" fill="#b51f1f"/><circle cx="1052.50" cy="469.50" r="2.6" fill="#b51f1f"/><circle cx="1421.50" cy="277.50" r="2.6" fill="#b51f1f"/><circle cx="1421.50" cy="496.50" r="2.6" fill="#b51f1f"/><circle cx="1545.50" cy="359.50" r="2.6" fill="#b51f1f"/><text font-size="15.5" fill="#222" transform="translate(214.70 279.40) scale(0.960 1)" >N_8</text><text font-size="15.5" fill="#222" transform="translate(218.00 375.70) scale(0.945 1)" >EARTH</text><path d="M212 378.7h5" stroke="#222" stroke-width="1.2"/><text font-size="15.5" fill="#222" transform="translate(214.70 472.40) scale(0.961 1)" >P_8</text><text font-size="16" fill="#222" transform="translate(450.50 309.60) scale(0.758 1)" >C?</text><text x="460.00" y="335.00" font-size="15.5" fill="#222" letter-spacing="1.21" >2.2nf/50V</text><text font-size="16" fill="#222" transform="translate(450.50 418.50) scale(0.758 1)" >C?</text><text x="460.00" y="444.40" font-size="15.5" fill="#222" letter-spacing="1.21" >2.2nf/50V</text><text x="573.00" y="358.30" font-size="16" fill="#222" letter-spacing="1.55" >R?</text><text x="563.00" y="418.80" font-size="15.5" fill="#222" letter-spacing="0.14" >160R/2512</text><text x="669.00" y="358.30" font-size="16" fill="#222" letter-spacing="1.55" >R?</text><text x="659.00" y="418.80" font-size="15.5" fill="#222" letter-spacing="0.23" >10K/2512</text><text x="736.50" y="263.30" font-size="16" fill="#222" letter-spacing="0.05" >R?</text><text font-size="15.5" fill="#222" transform="translate(725.00 305.50) scale(0.990 1)" >1K/O8O5</text><text x="736.50" y="455.20" font-size="16" fill="#222" letter-spacing="0.05" >R?</text><text font-size="15.5" fill="#222" transform="translate(725.00 497.00) scale(0.990 1)" >1K/O8O5</text><text font-size="16" fill="#222" transform="translate(833.50 364.20) scale(0.758 1)" >C?</text><text x="837.00" y="390.00" font-size="15.5" fill="#222" letter-spacing="1.04" >100nf/50V</text><text font-size="16" fill="#222" transform="translate(930.00 309.00) scale(0.758 1)" >C?</text><text x="940.00" y="333.60" font-size="15.5" fill="#222" letter-spacing="1.08" >2.2nf/50V</text><text font-size="15.5" fill="#222" transform="translate(970.00 416.00) scale(0.958 1)" >GND</text><text font-size="16" fill="#222" transform="translate(930.00 418.00) scale(0.758 1)" >C?</text><text x="940.00" y="443.60" font-size="15.5" fill="#222" letter-spacing="1.08" >2.2nf/50V</text><text x="1066.00" y="316.80" font-size="16" fill="#222" letter-spacing="0.05" >R?</text><text x="1056.00" y="376.40" font-size="15.5" fill="#222" letter-spacing="0.11" >1M/0603</text><text x="1066.00" y="397.80" font-size="16" fill="#222" letter-spacing="0.05" >R?</text><text x="1056.00" y="458.90" font-size="15.5" fill="#222" letter-spacing="0.11" >1M/0603</text><text x="1188.00" y="344.80" font-size="16" fill="#222" letter-spacing="1.55" >R?</text><text x="1181.00" y="400.60" font-size="15.5" fill="#222" letter-spacing="0.30" >49.9K/0805</text><text x="1408.70" y="211.90" font-size="15.5" fill="#222" letter-spacing="0.49" >+15VA</text><text x="1408.00" y="582.00" font-size="15.5" fill="#222" letter-spacing="0.77" >-15VA</text><text x="1431.30" y="334.70" font-size="14" fill="#222" letter-spacing="0.80" >OPA?</text><text x="1430.00" y="464.20" font-size="14" fill="#222" letter-spacing="1.26" >TI_INA128UA</text><text x="1374.5" y="344" font-size="11" fill="#222">2</text><text x="1374.5" y="371.3" font-size="11" fill="#222">1</text><text x="1374.5" y="398.7" font-size="11" fill="#222">8</text><text x="1374.5" y="426" font-size="11" fill="#222">3</text><text x="1463" y="357.5" font-size="11" fill="#222">6</text><text x="1463" y="412.5" font-size="11" fill="#222">5</text><text x="1560.5" y="316.7" font-size="14" fill="#222">1</text><text x="1560.5" y="535.5" font-size="14" fill="#222">1</text><text font-size="11" fill="#222" transform="translate(1418.5 325.5) rotate(-90)">7</text><text font-size="11" fill="#222" transform="translate(1418.5 462.5) rotate(-90)">4</text><text x="1401.50" y="352.50" font-size="11.5" fill="#4d6b6b" letter-spacing="0.09" >-IN</text><text x="1427.50" y="366.70" font-size="11.5" fill="#4d6b6b" letter-spacing="0.07" >Vo</text><text font-size="11.5" fill="#4d6b6b" transform="translate(1401.50 380.00) scale(0.825 1)" >RG1</text><text font-size="11.5" fill="#4d6b6b" transform="translate(1401.50 408.00) scale(0.909 1)" >RG2</text><text font-size="11.5" fill="#4d6b6b" transform="translate(1423.50 420.30) scale(0.978 1)" >Ref</text><text x="1401.50" y="434.20" font-size="11.5" fill="#4d6b6b" letter-spacing="0.14" >+IN</text><text font-size="11" fill="#4d6b6b" transform="translate(1428 352.5) rotate(-90)">V+</text><text font-size="11" fill="#4d6b6b" transform="translate(1428 435.5) rotate(-90)">V-</text></g><g transform="translate(0 411)"><path d="M353.50 277.50L723.50 277.50" stroke="#3b6596" stroke-width="1"/><path d="M792.50 277.50L1353.50 277.50" stroke="#3b6596" stroke-width="1"/><path d="M1353.50 277.50L1353.50 346.50" stroke="#3b6596" stroke-width="1" fill="none"/><path d="M353.50 469.50L723.50 469.50" stroke="#3b6596" stroke-width="1"/><path d="M792.50 469.50L1353.50 469.50" stroke="#3b6596" stroke-width="1"/><path d="M1353.50 469.50L1353.50 428.50" stroke="#3b6596" stroke-width="1" fill="none"/><path d="M326.50 373.50L449.50 373.50" stroke="#3b6596" stroke-width="1"/><path d="M449.50 277.50L449.50 291.50" stroke="#3b6596" stroke-width="1"/><path d="M449.50 332.50L449.50 400.50" stroke="#3b6596" stroke-width="1"/><path d="M449.50 441.50L449.50 469.50" stroke="#3b6596" stroke-width="1"/><path d="M928.50 277.50L928.50 291.50" stroke="#3b6596" stroke-width="1"/><path d="M928.50 332.50L928.50 400.50" stroke="#3b6596" stroke-width="1"/><path d="M928.50 441.50L928.50 469.50" stroke="#3b6596" stroke-width="1"/><path d="M559.50 277.50L559.50 346.50" stroke="#3b6596" stroke-width="1"/><path d="M559.50 414.50L559.50 469.50" stroke="#3b6596" stroke-width="1"/><path d="M655.50 277.50L655.50 346.50" stroke="#3b6596" stroke-width="1"/><path d="M655.50 414.50L655.50 469.50" stroke="#3b6596" stroke-width="1"/><path d="M833.50 277.50L833.50 346.50" stroke="#3b6596" stroke-width="1"/><path d="M833.50 387.50L833.50 469.50" stroke="#3b6596" stroke-width="1"/><path d="M928.50 359.50L983.50 359.50L983.50 387.50" stroke="#3b6596" stroke-width="1" fill="none"/><path d="M1052.50 277.50L1052.50 304.50" stroke="#3b6596" stroke-width="1"/><path d="M1052.50 373.50L1052.50 387.50" stroke="#3b6596" stroke-width="1"/><path d="M1052.50 455.50L1052.50 469.50" stroke="#3b6596" stroke-width="1"/><path d="M1175.50 332.50L1175.50 318.50L1271.50 318.50L1271.50 373.50L1353.50 373.50" stroke="#3b6596" stroke-width="1" fill="none"/><path d="M1175.50 400.50L1175.50 441.50L1271.50 441.50L1271.50 400.50L1353.50 400.50" stroke="#3b6596" stroke-width="1" fill="none"/><path d="M1421.50 236.50L1421.50 291.50" stroke="#3b6596" stroke-width="1"/><path d="M1421.50 482.50L1421.50 537.50" stroke="#3b6596" stroke-width="1"/><path d="M1421.50 277.50L1568.00 277.50" stroke="#3b6596" stroke-width="1"/><path d="M1421.50 496.50L1568.00 496.50" stroke="#3b6596" stroke-width="1"/><path d="M1490.50 359.50L1568.00 359.50" stroke="#3b6596" stroke-width="1"/><path d="M1545.50 359.50L1545.50 387.50L1568.00 387.50" stroke="#3b6596" stroke-width="1" fill="none"/><path d="M1490.50 414.50L1558.50 414.50" stroke="#3b6596" stroke-width="1"/><path d="M1557.50 277.50L1568.00 277.50" stroke="#b58a3e" stroke-width="1.9"/><path d="M1557.50 496.50L1568.00 496.50" stroke="#b58a3e" stroke-width="1.9"/><path d="M449.50 291.50L449.50 309.30" stroke="#b58a3e" stroke-width="1.9"/><path d="M449.50 314.60L449.50 332.50" stroke="#b58a3e" stroke-width="1.9"/><path d="M435.80 309.30L463.20 309.30" stroke="#e0952a" stroke-width="1.4"/><path d="M435.80 314.60L463.20 314.60" stroke="#e0952a" stroke-width="1.4"/><path d="M449.50 400.50L449.50 418.30" stroke="#b58a3e" stroke-width="1.9"/><path d="M449.50 423.60L449.50 441.50" stroke="#b58a3e" stroke-width="1.9"/><path d="M435.80 418.30L463.20 418.30" stroke="#e0952a" stroke-width="1.4"/><path d="M435.80 423.60L463.20 423.60" stroke="#e0952a" stroke-width="1.4"/><path d="M559.50 346.50L559.50 359.50" stroke="#b58a3e" stroke-width="1.9"/><path d="M559.50 400.50L559.50 414.50" stroke="#b58a3e" stroke-width="1.9"/><rect x="552.50" y="359.50" width="14" height="41.07" fill="none" stroke="#e0952a" stroke-width="1.4"/><path d="M655.50 346.50L655.50 359.50" stroke="#b58a3e" stroke-width="1.9"/><path d="M655.50 400.50L655.50 414.50" stroke="#b58a3e" stroke-width="1.9"/><rect x="648.50" y="359.50" width="14" height="41.07" fill="none" stroke="#e0952a" stroke-width="1.4"/><path d="M723.50 277.50L737.50 277.50" stroke="#b58a3e" stroke-width="1.9"/><path d="M778.50 277.50L792.50 277.50" stroke="#b58a3e" stroke-width="1.9"/><rect x="737.50" y="270.60" width="41.07" height="13.8" fill="none" stroke="#e0952a" stroke-width="1.4"/><path d="M723.50 469.50L737.50 469.50" stroke="#b58a3e" stroke-width="1.9"/><path d="M778.50 469.50L792.50 469.50" stroke="#b58a3e" stroke-width="1.9"/><rect x="737.50" y="462.60" width="41.07" height="13.8" fill="none" stroke="#e0952a" stroke-width="1.4"/><path d="M833.50 346.50L833.50 364.10" stroke="#b58a3e" stroke-width="1.9"/><path d="M833.50 369.30L833.50 387.50" stroke="#b58a3e" stroke-width="1.9"/><path d="M819.80 364.10L847.20 364.10" stroke="#e0952a" stroke-width="1.4"/><path d="M819.80 369.30L847.20 369.30" stroke="#e0952a" stroke-width="1.4"/><path d="M928.50 291.50L928.50 309.30" stroke="#b58a3e" stroke-width="1.9"/><path d="M928.50 314.60L928.50 332.50" stroke="#b58a3e" stroke-width="1.9"/><path d="M914.80 309.30L942.20 309.30" stroke="#e0952a" stroke-width="1.4"/><path d="M914.80 314.60L942.20 314.60" stroke="#e0952a" stroke-width="1.4"/><path d="M928.50 400.50L928.50 418.30" stroke="#b58a3e" stroke-width="1.9"/><path d="M928.50 423.60L928.50 441.50" stroke="#b58a3e" stroke-width="1.9"/><path d="M914.80 418.30L942.20 418.30" stroke="#e0952a" stroke-width="1.4"/><path d="M914.80 423.60L942.20 423.60" stroke="#e0952a" stroke-width="1.4"/><path d="M1052.50 304.50L1052.50 318.50" stroke="#b58a3e" stroke-width="1.9"/><path d="M1052.50 359.50L1052.50 373.50" stroke="#b58a3e" stroke-width="1.9"/><rect x="1045.50" y="318.50" width="14" height="41.07" fill="none" stroke="#e0952a" stroke-width="1.4"/><path d="M1052.50 387.50L1052.50 400.50" stroke="#b58a3e" stroke-width="1.9"/><path d="M1052.50 441.50L1052.50 455.50" stroke="#b58a3e" stroke-width="1.9"/><rect x="1045.50" y="400.50" width="14" height="41.07" fill="none" stroke="#e0952a" stroke-width="1.4"/><path d="M1175.50 332.50L1175.50 346.50" stroke="#b58a3e" stroke-width="1.9"/><path d="M1175.50 387.50L1175.50 400.50" stroke="#b58a3e" stroke-width="1.9"/><rect x="1168.50" y="346.50" width="14" height="41.07" fill="none" stroke="#e0952a" stroke-width="1.4"/><path d="M969.50 387.50L997.50 387.50" stroke="#111" stroke-width="1.8"/><path d="M975.00 391.80L992.00 391.80" stroke="#111" stroke-width="1.8"/><path d="M979.50 395.80L987.50 395.80" stroke="#111" stroke-width="1.8"/><path d="M326.50 358.70L326.50 388.30" stroke="#111" stroke-width="2.6"/><path d="M312.50 352.90L326.50 359.50" stroke="#111" stroke-width="2.6"/><path d="M312.50 366.90L326.50 373.50" stroke="#111" stroke-width="2.6"/><path d="M312.50 380.90L326.50 387.50" stroke="#111" stroke-width="2.6"/><path d="M312.50 269.50L340.50 269.50L353.50 277.50L340.50 285.50L312.50 285.50L312.50 269.50" stroke="#111" stroke-width="2.4" fill="none"/><path d="M312.50 461.50L340.50 461.50L353.50 469.50L340.50 477.50L312.50 477.50L312.50 461.50" stroke="#111" stroke-width="2.4" fill="none"/><path d="M1414.00 222.50L1429.00 222.50" stroke="#111" stroke-width="2.4"/><path d="M1421.50 222.50L1421.50 236.50" stroke="#111" stroke-width="2.4"/><path d="M1414.00 551.50L1429.00 551.50" stroke="#111" stroke-width="2.4"/><path d="M1421.50 537.50L1421.50 551.50" stroke="#111" stroke-width="2.4"/><path d="M1558.50 400.50L1558.50 428.50" stroke="#111" stroke-width="2.2"/><path d="M1562.70 404.80L1562.70 424.20" stroke="#111" stroke-width="1.8"/><path d="M1566.00 408.00L1566.00 420.00" stroke="#111" stroke-width="1.4"/><path d="M1353.50 346.50L1394.50 346.50" stroke="#b58a3e" stroke-width="2"/><path d="M1353.50 373.50L1394.50 373.50" stroke="#b58a3e" stroke-width="2"/><path d="M1353.50 400.50L1394.50 400.50" stroke="#b58a3e" stroke-width="2"/><path d="M1353.50 428.50L1394.50 428.50" stroke="#b58a3e" stroke-width="2"/><path d="M1388.50 342.50L1394.50 346.50L1388.50 350.50z" fill="#b58a3e"/><path d="M1388.50 424.50L1394.50 428.50L1388.50 432.50z" fill="#b58a3e"/><path d="M1421.50 291.50L1421.50 332.50" stroke="#b58a3e" stroke-width="2"/><path d="M1421.50 441.50L1421.50 482.50" stroke="#b58a3e" stroke-width="2"/><path d="M1449.50 359.50L1490.50 359.50" stroke="#b58a3e" stroke-width="2"/><path d="M1449.50 414.50L1490.50 414.50" stroke="#b58a3e" stroke-width="2"/><rect x="1394.50" y="332.50" width="54.76" height="109.52" fill="none" stroke="#e0952a" stroke-width="1.6"/><path d="M1416.5 381v12.5l13.5-6.25z" fill="none" stroke="#e0952a" stroke-width="1.3"/><circle cx="449.50" cy="277.50" r="2.6" fill="#b51f1f"/><circle cx="559.50" cy="277.50" r="2.6" fill="#b51f1f"/><circle cx="655.50" cy="277.50" r="2.6" fill="#b51f1f"/><circle cx="833.50" cy="277.50" r="2.6" fill="#b51f1f"/><circle cx="928.50" cy="277.50" r="2.6" fill="#b51f1f"/><circle cx="1052.50" cy="277.50" r="2.6" fill="#b51f1f"/><circle cx="449.50" cy="373.50" r="2.6" fill="#b51f1f"/><circle cx="928.50" cy="359.50" r="2.6" fill="#b51f1f"/><circle cx="449.50" cy="469.50" r="2.6" fill="#b51f1f"/><circle cx="559.50" cy="469.50" r="2.6" fill="#b51f1f"/><circle cx="655.50" cy="469.50" r="2.6" fill="#b51f1f"/><circle cx="833.50" cy="469.50" r="2.6" fill="#b51f1f"/><circle cx="928.50" cy="469.50" r="2.6" fill="#b51f1f"/><circle cx="1052.50" cy="469.50" r="2.6" fill="#b51f1f"/><circle cx="1421.50" cy="277.50" r="2.6" fill="#b51f1f"/><circle cx="1421.50" cy="496.50" r="2.6" fill="#b51f1f"/><circle cx="1545.50" cy="359.50" r="2.6" fill="#b51f1f"/><text font-size="15.5" fill="#222" transform="translate(214.70 279.40) scale(0.960 1)" >N_7</text><text font-size="15.5" fill="#222" transform="translate(218.00 375.70) scale(0.945 1)" >EARTH</text><path d="M212 378.7h5" stroke="#222" stroke-width="1.2"/><text font-size="15.5" fill="#222" transform="translate(214.70 472.40) scale(0.961 1)" >P_7</text><text font-size="16" fill="#222" transform="translate(450.50 309.60) scale(0.758 1)" >C?</text><text x="460.00" y="335.00" font-size="15.5" fill="#222" letter-spacing="1.21" >2.2nf/50V</text><text font-size="16" fill="#222" transform="translate(450.50 418.50) scale(0.758 1)" >C?</text><text x="460.00" y="444.40" font-size="15.5" fill="#222" letter-spacing="1.21" >2.2nf/50V</text><text x="573.00" y="358.30" font-size="16" fill="#222" letter-spacing="1.55" >R?</text><text x="563.00" y="418.80" font-size="15.5" fill="#222" letter-spacing="0.14" >160R/2512</text><text x="669.00" y="358.30" font-size="16" fill="#222" letter-spacing="1.55" >R?</text><text x="659.00" y="418.80" font-size="15.5" fill="#222" letter-spacing="0.23" >10K/2512</text><text x="736.50" y="263.30" font-size="16" fill="#222" letter-spacing="0.05" >R?</text><text font-size="15.5" fill="#222" transform="translate(725.00 305.50) scale(0.990 1)" >1K/O8O5</text><text x="736.50" y="455.20" font-size="16" fill="#222" letter-spacing="0.05" >R?</text><text font-size="15.5" fill="#222" transform="translate(725.00 497.00) scale(0.990 1)" >1K/O8O5</text><text font-size="16" fill="#222" transform="translate(833.50 364.20) scale(0.758 1)" >C?</text><text x="837.00" y="390.00" font-size="15.5" fill="#222" letter-spacing="1.04" >100nf/50V</text><text font-size="16" fill="#222" transform="translate(930.00 309.00) scale(0.758 1)" >C?</text><text x="940.00" y="333.60" font-size="15.5" fill="#222" letter-spacing="1.08" >2.2nf/50V</text><text font-size="15.5" fill="#222" transform="translate(970.00 416.00) scale(0.958 1)" >GND</text><text font-size="16" fill="#222" transform="translate(930.00 418.00) scale(0.758 1)" >C?</text><text x="940.00" y="443.60" font-size="15.5" fill="#222" letter-spacing="1.08" >2.2nf/50V</text><text x="1066.00" y="316.80" font-size="16" fill="#222" letter-spacing="0.05" >R?</text><text x="1056.00" y="376.40" font-size="15.5" fill="#222" letter-spacing="0.11" >1M/0603</text><text x="1066.00" y="397.80" font-size="16" fill="#222" letter-spacing="0.05" >R?</text><text x="1056.00" y="458.90" font-size="15.5" fill="#222" letter-spacing="0.11" >1M/0603</text><text x="1188.00" y="344.80" font-size="16" fill="#222" letter-spacing="1.55" >R?</text><text x="1181.00" y="400.60" font-size="15.5" fill="#222" letter-spacing="0.30" >49.9K/0805</text><text x="1408.70" y="211.90" font-size="15.5" fill="#222" letter-spacing="0.49" >+15VA</text><text x="1408.00" y="582.00" font-size="15.5" fill="#222" letter-spacing="0.77" >-15VA</text><text x="1431.30" y="334.70" font-size="14" fill="#222" letter-spacing="0.80" >OPA?</text><text x="1430.00" y="464.20" font-size="14" fill="#222" letter-spacing="1.26" >TI_INA128UA</text><text x="1374.5" y="344" font-size="11" fill="#222">2</text><text x="1374.5" y="371.3" font-size="11" fill="#222">1</text><text x="1374.5" y="398.7" font-size="11" fill="#222">8</text><text x="1374.5" y="426" font-size="11" fill="#222">3</text><text x="1463" y="357.5" font-size="11" fill="#222">6</text><text x="1463" y="412.5" font-size="11" fill="#222">5</text><text x="1560.5" y="316.7" font-size="14" fill="#222">1</text><text x="1560.5" y="535.5" font-size="14" fill="#222">1</text><text font-size="11" fill="#222" transform="translate(1418.5 325.5) rotate(-90)">7</text><text font-size="11" fill="#222" transform="translate(1418.5 462.5) rotate(-90)">4</text><text x="1401.50" y="352.50" font-size="11.5" fill="#4d6b6b" letter-spacing="0.09" >-IN</text><text x="1427.50" y="366.70" font-size="11.5" fill="#4d6b6b" letter-spacing="0.07" >Vo</text><text font-size="11.5" fill="#4d6b6b" transform="translate(1401.50 380.00) scale(0.825 1)" >RG1</text><text font-size="11.5" fill="#4d6b6b" transform="translate(1401.50 408.00) scale(0.909 1)" >RG2</text><text font-size="11.5" fill="#4d6b6b" transform="translate(1423.50 420.30) scale(0.978 1)" >Ref</text><text x="1401.50" y="434.20" font-size="11.5" fill="#4d6b6b" letter-spacing="0.14" >+IN</text><text font-size="11" fill="#4d6b6b" transform="translate(1428 352.5) rotate(-90)">V+</text><text font-size="11" fill="#4d6b6b" transform="translate(1428 435.5) rotate(-90)">V-</text></g>
<path d="M579.5 526.5v17l4-4 3 6.5 2.2-1-3-6.3h5.5z" fill="#fff" stroke="#111" stroke-width="1"/>
</g>
<path d="M212.5 852V195.5H1567.5" fill="none" stroke="#6d6d6d" stroke-width="2"/>
</svg><!--/CANVAS-->
<div id="rp" class="a"></div>
<style>
.pb{background:#1b9ad8;color:#fff;font-size:12.5px;text-align:center;border-radius:2px;letter-spacing:0.05px}
.ph{position:absolute;font-size:17px;line-height:20px;color:#555;white-space:nowrap;letter-spacing:0.6px}
.pl{position:absolute;font-size:12.5px;line-height:15px;color:#777;white-space:nowrap;letter-spacing:0.8px}
.pv{position:absolute;font-size:12.5px;line-height:15px;color:#111;white-space:nowrap;letter-spacing:0.8px}
.sg{background:#fdfdfd;border:1px solid #d0d0d0;color:#111;font-size:12.5px;text-align:center;letter-spacing:0.6px;overflow:hidden}
.sg.on{background:#1b9ad8;border-color:#1b9ad8;color:#fff}
</style>
<div class="a" style="left:1580px;top:204px;width:324px;height:653px;background:#fdfdfd"></div>
<div class="a" style="left:1585px;top:170px;font-size:21px;line-height:26px;color:#333;letter-spacing:0.4px">Properties</div>
<svg class="a" style="left:1580px;top:166px" width="340" height="700" viewBox="1580 166 340 700">
 <path d="M1866 183h9l-4.5 5z" fill="#777"/>
 <g fill="none" stroke="#777" stroke-width="1.3"><path d="M1887 180.5h6M1888.5 180.5v5h3v-5M1886 185.5h8M1890 185.5v3.5"/><path d="M1904.5 181.5l7 7M1911.5 181.5l-7 7"/></g>
 <g fill="#666"><path d="M1598 217h13l-6.5 7.5z"/><path d="M1598 379h13l-6.5 7.5z"/><path d="M1598 496h13l-6.5 7.5z"/><path d="M1598 631h13l-6.5 7.5z"/></g>
 <g stroke="#e8e8e8" stroke-width="1"><path d="M1590 240.5h303M1580 365.5h324M1590 401.5h303M1580 482.5h324M1590 518.5h303M1580 617.5h324M1590 653.5h303"/></g>
 <path d="M1603.5 850V686.5h6M1680 686.5h224" fill="none" stroke="#d8d8d8"/>
 <path d="M1603.5 850.5h300" stroke="#d8d8d8"/>
 <rect x="1713.5" y="709.5" width="77" height="20.5" rx="10" fill="#fdfdfd" stroke="#c8c8c8"/>
 <rect x="1697.5" y="822.5" width="87.5" height="20" rx="10" fill="#fdfdfd" stroke="#c8c8c8"/>
 <rect x="1904" y="204" width="16" height="654" fill="#e6e6e6"/>
 <rect x="1910.5" y="221" width="2" height="452" fill="#6a6a6a"/>
 <rect x="1909" y="703" width="11" height="53" rx="2" fill="#4a4a4a"/>
 <g stroke="#9ac" stroke-width="1"><path d="M1912 708h6M1912 711h6M1912 714h6M1912 746h6M1912 749h6"/></g>
 <g stroke="#d9a640" stroke-width="1"><path d="M1912 720h6M1912 723h6M1912 726h6M1912 729h6M1912 732h6M1912 735h6"/></g>
</svg>
<div class="ph" style="left:1618px;top:212px">Selection Filter</div>
<div class="a pb" style="left:1594px;top:245px;width:60px;height:20px;line-height:20px">Select All</div><div class="a pb" style="left:1594px;top:269.5px;width:31px;height:19.0px;line-height:19.0px">Nets</div><div class="a pb" style="left:1629px;top:269.5px;width:54.5px;height:19.0px;line-height:19.0px">Net alias</div><div class="a pb" style="left:1688px;top:269.5px;width:59px;height:19.0px;line-height:19.0px">Bus entry</div><div class="a pb" style="left:1752px;top:269.5px;width:29.5px;height:19.0px;line-height:19.0px">Pins</div><div class="a pb" style="left:1786px;top:269.5px;width:112px;height:19.0px;line-height:19.0px">Un-connected pins</div><div class="a pb" style="left:1594px;top:293.5px;width:34.5px;height:19.0px;line-height:19.0px">Parts</div><div class="a pb" style="left:1633px;top:293.5px;width:71.5px;height:19.0px;line-height:19.0px">Power/GND</div><div class="a pb" style="left:1709px;top:293.5px;width:108px;height:19.0px;line-height:19.0px">Off-page-connects</div><div class="a pb" style="left:1822px;top:293.5px;width:69.5px;height:19.0px;line-height:19.0px">Title blocks</div><div class="a pb" style="left:1594px;top:317.5px;width:108.5px;height:19.0px;line-height:19.0px">Hierarchical Block</div><div class="a pb" style="left:1707px;top:317.5px;width:99.5px;height:19.0px;line-height:19.0px">Hierarchical Port</div><div class="a pb" style="left:1594px;top:341.5px;width:109px;height:19.0px;line-height:19.0px">Display Properties</div><div class="a pb" style="left:1708px;top:341.5px;width:104.5px;height:19.0px;line-height:19.0px">Graphical objects</div>
<div class="ph" style="left:1618px;top:374px;letter-spacing:0.2px">General</div>
<div class="pl" style="left:1606px;top:410px;letter-spacing:0.5px">Name</div>
<div class="pl" style="left:1606px;top:435px">Page Number</div>
<div class="pl" style="left:1606px;top:460px;letter-spacing:0.7px">Page Count</div>
<div class="pv" style="left:1750px;top:410px">Page1</div>
<div class="pv" style="left:1750px;top:435px">1</div>
<div class="pv" style="left:1750px;top:460px">2</div>
<div class="ph" style="left:1618px;top:491px;letter-spacing:0.2px">Grid</div>
<div class="pl" style="left:1594px;top:537px;letter-spacing:1.2px">Style</div>
<div class="pl" style="left:1594px;top:570px;letter-spacing:0.95px">Electrical Grid</div>
<div class="pl" style="left:1594px;top:601px;letter-spacing:0.7px">Documentation Grid</div>
<div class="a sg" style="left:1742px;top:530.5px;width:60px;height:22.0px;line-height:20.0px">Dot</div><div class="a sg on" style="left:1802px;top:530.5px;width:59px;height:22.0px;line-height:20.0px">Line</div><div class="a sg" style="left:1861px;top:530.5px;width:59px;height:22.0px;line-height:20.0px">None</div>
<div class="a sg on" style="left:1742px;top:563.5px;width:60px;height:22.0px;line-height:20.0px">1/1</div><div class="a sg" style="left:1802px;top:563.5px;width:59px;height:22.0px;line-height:20.0px">1/2</div><div class="a sg" style="left:1861px;top:563.5px;width:59px;height:22.0px;line-height:20.0px">1/10</div>
<div class="a sg on" style="left:1742px;top:594.5px;width:60px;height:22.0px;line-height:20.0px">1/1</div><div class="a sg" style="left:1802px;top:594.5px;width:59px;height:22.0px;line-height:20.0px">1/2</div><div class="a sg" style="left:1861px;top:594.5px;width:59px;height:22.0px;line-height:20.0px">1/10</div>
<div class="a" style="left:1904px;top:525px;width:16px;height:95px;background:#e6e6e6"></div>
<div class="a" style="left:1910.5px;top:525px;width:2px;height:95px;background:#6a6a6a"></div>
<div class="ph" style="left:1618px;top:627px;letter-spacing:0.25px">Grid Reference</div>
<div class="pv" style="left:1612px;top:680px;letter-spacing:0.85px">Horizontal</div>
<div class="pl" style="left:1639px;top:715px;letter-spacing:1.0px">Count:</div>
<div class="pv" style="left:1721px;top:713px">5</div>
<div class="pl" style="left:1639px;top:750px;letter-spacing:0.75px">Numbering:</div>
<div class="pl" style="left:1639px;top:786px;letter-spacing:0.9px">Sequence:</div>
<div class="pl" style="left:1639px;top:827px;letter-spacing:1.1px">Width:</div>
<div class="pv" style="left:1707px;top:826px">2.54</div>
<div class="pl" style="left:1798px;top:828px;letter-spacing:0.65px">Millimete</div>
<div class="a sg on" style="left:1737px;top:746px;width:88px;height:21.5px;line-height:19.5px;font-size:11px;letter-spacing:0">Numeric</div><div class="a sg" style="left:1825px;top:746px;width:79px;height:21.5px;line-height:19.5px;font-size:11px;letter-spacing:0">Alphabetic</div>
<div class="a sg on" style="left:1737px;top:782px;width:88px;height:21.5px;line-height:19.5px;font-size:11px;letter-spacing:0">Ascending</div><div class="a sg" style="left:1825px;top:782px;width:79px;height:21.5px;line-height:19.5px;font-size:11px;letter-spacing:0">Descending</div>

<div id="drc" class="a"></div>
<style>
.dh{font-size:12.5px;line-height:16px;color:#333;letter-spacing:0px}
</style>
<div class="a" style="left:0;top:858px;width:1920px;height:5.5px;background:#cfcfcf"></div>
<div class="a" style="left:5px;top:868.5px;font-size:21.5px;line-height:28px;color:#333;letter-spacing:0.2px">DRCs</div>
<svg class="a" style="left:1860px;top:870px" width="60" height="30" viewBox="1860 870 60 30">
 <path d="M1866 881h9l-4.5 5z" fill="#777"/>
 <g fill="none" stroke="#777" stroke-width="1.3"><path d="M1887 878.5h6M1888.5 878.5v5h3v-5M1886 883.5h8M1890 883.5v3.5"/><path d="M1904.5 879.5l7 7M1911.5 879.5l-7 7"/></g>
</svg>
<div class="a" style="left:0.5px;top:902.5px;width:55.5px;height:23.5px;background:#f0f0f0;border:1px solid #d6d6d6;border-top-color:#e2e2e2"></div><div class="a" style="left:57px;top:902.5px;width:68px;height:23.5px;background:#f0f0f0;border:1px solid #d6d6d6;border-top-color:#e2e2e2"></div><div class="a" style="left:126px;top:902.5px;width:77px;height:23.5px;background:#f0f0f0;border:1px solid #d6d6d6;border-top-color:#e2e2e2"></div><div class="a" style="left:204px;top:902.5px;width:44px;height:23.5px;background:#f0f0f0;border:1px solid #d6d6d6;border-top-color:#e2e2e2"></div><div class="a" style="left:249px;top:902.5px;width:61px;height:23.5px;background:#f0f0f0;border:1px solid #d6d6d6;border-top-color:#e2e2e2"></div><div class="a" style="left:311px;top:902.5px;width:40px;height:23.5px;background:#f0f0f0;border:1px solid #d6d6d6;border-top-color:#e2e2e2"></div><div class="a" style="left:352px;top:902.5px;width:68px;height:23.5px;background:#f0f0f0;border:1px solid #d6d6d6;border-top-color:#e2e2e2"></div><div class="a" style="left:421px;top:902.5px;width:101px;height:23.5px;background:#f0f0f0;border:1px solid #d6d6d6;border-top-color:#e2e2e2"></div><div class="a" style="left:523px;top:902.5px;width:430px;height:23.5px;background:#f0f0f0;border:1px solid #d6d6d6;border-top-color:#e2e2e2"></div><div class="a" style="left:954px;top:902.5px;width:958px;height:23.5px;background:#f0f0f0;border:1px solid #d6d6d6;border-top-color:#e2e2e2"></div><div class="a dh" style="left:4px;top:906px">Severity</div><div class="a dh" style="left:61px;top:906px">DRC Type</div><div class="a dh" style="left:130px;top:906px">Description</div><div class="a dh" style="left:208px;top:906px">Detail</div><div class="a dh" style="left:253px;top:906px">Location</div><div class="a dh" style="left:314px;top:906px">Page</div><div class="a dh" style="left:355px;top:906px">Schematic</div><div class="a dh" style="left:425px;top:906px">Occurence Path</div><div class="a dh" style="left:527px;top:906px">Waived</div>
<div class="a" style="left:0;top:926px;width:1920px;height:58px;background:#fdfdfb;border-bottom:1px solid #d8d8d8"></div>
<div class="a" style="left:123.5px;top:983.5px;width:42px;height:23px;background:#fdfdfd;border:1px solid #d0d0d0;border-top:none"></div>
<div class="a dh" style="left:6px;top:989px">Logs</div>
<div class="a dh" style="left:47px;top:989px;letter-spacing:0.3px">Find Results</div>
<div class="a dh" style="left:129px;top:989px">DRCs</div>
<div id="status" class="a"></div>
<div class="a" style="left:0;top:1007.5px;width:1920px;height:1px;background:#d6d6d6"></div>
<div class="a" style="left:1427px;top:1012px;font-size:12.5px;line-height:16px;color:#333;letter-spacing:0.25px">0 items selected</div>
<div class="a" style="left:1713px;top:1012px;font-size:12.5px;line-height:16px;color:#333;letter-spacing:0.1px">Scale=136%</div>
<div class="a" style="left:1795px;top:1012px;font-size:12.5px;line-height:16px;color:#333;letter-spacing:0px">X=3.440</div>
<div class="a" style="left:1863px;top:1012px;font-size:12.5px;line-height:16px;color:#333;letter-spacing:0px">Y=3.830</div>

<div id="task" class="a"></div>
<div class="a" style="left:0;top:1032px;width:1920px;height:1px;background:#c9cdd0"></div>
<svg class="a" style="left:0;top:1032px" width="1920" height="48" viewBox="0 1032 1920 48" font-family="Liberation Sans">
 <defs>
  <linearGradient id="tb" x1="0" x2="1" y1="0" y2="0"><stop offset="0" stop-color="#dde8ea"/><stop offset="0.5" stop-color="#dfe8ef"/><stop offset="1" stop-color="#e0e8f1"/></linearGradient>
  <linearGradient id="win" x1="0" x2="1" y1="0" y2="1"><stop offset="0" stop-color="#3cc0f0"/><stop offset="1" stop-color="#0a70d8"/></linearGradient>
  <linearGradient id="edge" x1="0" x2="1" y1="0" y2="1"><stop offset="0" stop-color="#35c1a8"/><stop offset="1" stop-color="#0b62c8"/></linearGradient>
 </defs>
 <rect x="0" y="1033" width="1920" height="47" fill="url(#tb)"/>
 <!-- stock widget -->
 <path d="M19 1058l6-5 4 3 6-6h-3.5v-2.5h8.5v8.5h-2.5v-3.5l-8.5 8.5-4-3-4 3.5z" fill="#d4541c"/>
 <path d="M19 1058l3-2.5 3 3.5-3 2.5z" fill="#b8301c"/>
 <g fill="none" stroke="#222" stroke-width="1" transform="translate(3.6 -1.5) scale(0.93 1)">
  <path d="M51 1044.5h11M56.5 1043v1.5M52 1047h9M53 1049h7v2.5h-7zM51.5 1052.5h10v5h-10zM56.5 1052.5v5M51.5 1055h10"/>
  <path d="M64 1044.5h4v10h-4zM64 1049.5h4M69 1046.5h6M73 1044v13l-1.5-1M70 1050l1 2"/>
  <path d="M78 1047h10v5h-10zM83 1043.5v14"/>
  <path d="M90.5 1044.5h10.5v13h-10.5zM92.5 1047.5h6.5M92.5 1051h6.5M92.5 1054.5h6.5M95.8 1047.5v7M97 1052.5l1 1"/>
 </g>
 <text x="98" y="1052" font-size="12" fill="#222" letter-spacing="0.2">A50</text>
 <text x="50" y="1068" font-size="11" fill="#c8401c">+1.31%</text>
 <!-- windows logo -->
 <g fill="url(#win)"><rect x="595" y="1045" width="11" height="11"/><rect x="607" y="1045" width="11" height="11"/><rect x="595" y="1057" width="11" height="11"/><rect x="607" y="1057" width="11" height="11"/></g>
 <!-- search -->
 <rect x="632.5" y="1040.5" width="217" height="30.5" rx="15.25" fill="#f4f7f9" stroke="#cfd6dc"/>
 <g fill="none" stroke="#222" stroke-width="1.8"><circle cx="649" cy="1055" r="5.5"/><path d="M653 1059l4.5 4.5"/></g>
 <g fill="none" stroke="#444" stroke-width="1">
  <path d="M669 1050h4M671 1047v14l-1-1M669 1056l4-2M675 1048h6v3h-6zM674 1052.5h8M678 1051v3M675 1055h7l-6 5M676 1056l6 4"/>
  <path d="M684 1048h12M690 1046v3M685.5 1050h9l-2 2h-5l7 3h-9l2-2M686 1057h8M690 1055v6l-1 0M687 1060l-2 1M693 1060l2 1"/>
 </g>
 <path d="M803 1064c8-6 20-8 45-6l-2 6c-10 4-30 5-43 0z" fill="#a0703a"/>
 <ellipse cx="838" cy="1053" rx="9" ry="7.5" fill="#e8e6e0"/>
 <ellipse cx="817" cy="1058" rx="5" ry="4" fill="#e0ddd5"/>
 <ellipse cx="826" cy="1057" rx="4" ry="4" fill="#d8d4cc"/>
 <!-- copilot pre -->
 <path d="M865 1047c6-3 14-3 20 1l-3 12h-15z" fill="#3aa0e0"/>
 <path d="M865 1048c2-2 6-3 9-2l-6 10h-4z" fill="#f0b030"/>
 <rect x="871" y="1060" width="16" height="8" rx="1.5" fill="#f0b030"/>
 <text x="872.5" y="1066.8" font-size="6.5" font-weight="bold" fill="#333">PRE</text>
 <!-- task view -->
 <rect x="916" y="1045" width="15" height="14" fill="#f4f4f4" stroke="#ccc" stroke-width="0.6"/>
 <rect x="907" y="1053" width="15" height="14" fill="#1c1c1c"/>
 <rect x="909" y="1055" width="11" height="4" fill="#555"/>
 <!-- explorer -->
 <path d="M951 1046h9l2 2h13v19h-24z" fill="#f2c14e"/>
 <path d="M951 1050h24v17h-24z" fill="#f7d068"/>
 <rect x="957" y="1059" width="13" height="6" rx="1" fill="#1a7ad8"/>
 <!-- edge -->
 <circle cx="1007" cy="1056" r="12" fill="url(#edge)"/>
 <path d="M997 1060c3-8 15-9 19-2-3-1-8-1-10 3 2 3 8 4 12 3-4 5-14 6-21-4z" fill="#dfe8ef"/>
 <!-- blue chip app -->
 <rect x="1039" y="1044" width="24" height="24" rx="2" fill="#1a2a3a"/>
 <rect x="1041" y="1046" width="20" height="20" fill="none" stroke="#2a90e8" stroke-width="0.8"/>
 <rect x="1046" y="1051" width="10" height="10" fill="#2a90e8"/>
 <rect x="1048.5" y="1053.5" width="5" height="5" fill="#1a2a3a"/>
 <path d="M1051 1046v5M1051 1061v5M1041 1056h5M1056 1056h5" stroke="#7cc4f8" stroke-width="1.5"/>
 <!-- gold chip -->
 <rect x="1083" y="1044" width="24" height="24" rx="2.5" fill="#232323"/>
 <rect x="1088.5" y="1049.5" width="13" height="13" fill="#3a3a3a" stroke="#e8b850" stroke-width="1.6"/>
 <path d="M1091 1046v3.5M1095 1046v3.5M1099 1046v3.5M1091 1063v3.5M1095 1063v3.5M1099 1063v3.5M1085 1052h3.5M1085 1056h3.5M1085 1060h3.5M1102 1052h3.5M1102 1056h3.5M1102 1060h3.5" stroke="#e8b850" stroke-width="1.4"/>
 <!-- wechat highlighted -->
 <rect x="1119" y="1036" width="39.5" height="39.5" rx="4" fill="#fbe8e4"/>
 <ellipse cx="1135.5" cy="1053" rx="8.5" ry="7" fill="#2a8a9a"/>
 <path d="M1127 1053h17v2.5h-17z" fill="#1a6a8a"/>
 <ellipse cx="1144" cy="1058.5" rx="7" ry="6" fill="#e8e8e8"/>
 <rect x="1136" y="1071.5" width="7" height="3" rx="1.5" fill="#c01818"/>
 <!-- blue cube -->
 <path d="M1184 1045l10 4v14l-10 4.5-10-4.5v-3l5-2-5-2v-3l5-2-5-2z" fill="#1a7ae0"/>
 <path d="M1174 1049l10-4 10 4-10 4z" fill="#38b8f0"/>
 <path d="M1184 1053v-0" stroke="#fff"/>
 <path d="M1183 1055l5-2v7l-5 2z" fill="#eef"/>
 <!-- bird -->
 <path d="M1215 1055c3 8 12 11 20 5l4-6h-7c-4 3-9 4-12-1z" fill="#1a6ad8"/>
 <path d="M1222 1046h9c3 2 3 6 1 8l-6 1z" fill="#1aa8c8"/>
 <path d="M1228 1056l11-2-4 6c-3 2-6 3-10 2z" fill="#1a50a0"/>
 <!-- amp app -->
 <rect x="1259" y="1044" width="24" height="24" rx="2.5" fill="#232323"/>
 <path d="M1268 1046v20M1268 1049l9 7-9 7M1261 1052h7M1261 1060h7M1277 1056h5" fill="none" stroke="#e8b850" stroke-width="1.6"/>
 <!-- monitor -->
 <rect x="1303.5" y="1047.5" width="23" height="14" fill="#fff" stroke="#666" stroke-width="1.5"/>
 <path d="M1313 1063v2.5M1317 1063v2.5M1309 1065.5h12" stroke="#666" stroke-width="1.5"/>
 <path d="M1312 1052v2M1318 1052v2M1312 1055.5c1 2 5 2 6 0" fill="none" stroke="#777" stroke-width="0.8"/>
 <!-- indicators -->
 <g fill="#6a6e72"><rect x="959" y="1072" width="6" height="3" rx="1.5"/><rect x="1003" y="1072" width="6" height="3" rx="1.5"/><rect x="1047" y="1072" width="6" height="3" rx="1.5"/><rect x="1092" y="1072" width="6" height="3" rx="1.5"/><rect x="1180" y="1072" width="6" height="3" rx="1.5"/><rect x="1224" y="1072" width="6" height="3" rx="1.5"/><rect x="1268" y="1072" width="6" height="3" rx="1.5"/><rect x="1312" y="1072" width="6" height="3" rx="1.5"/></g>
 <!-- tray -->
 <path d="M1687 1058.5l5-5 5 5" fill="none" stroke="#222" stroke-width="1.4"/>
 <path d="M1717.5 1051.5h12v6h-12zM1723.5 1048v15.5" fill="none" stroke="#222" stroke-width="1.3"/>
 <g fill="none" stroke="#222" stroke-width="1.4"><path d="M1748 1053.5a12 12 0 0 1 16 0M1750.5 1056a8 8 0 0 1 11 0M1753 1058.5a4 4 0 0 1 6 0"/></g>
 <circle cx="1756" cy="1060.5" r="1.3" fill="#222"/>
 <path d="M1772.5 1053.5h3l4-3.5v13l-4-3.5h-3z" fill="none" stroke="#222" stroke-width="1.2"/>
 <path d="M1782 1053a5 5 0 0 1 0 7" fill="none" stroke="#222" stroke-width="1.1"/>
 <path d="M1785 1051a8 8 0 0 1 0 11" fill="none" stroke="#aaa" stroke-width="1"/>
 <rect x="1797" y="1051.5" width="13" height="9" rx="1.5" fill="none" stroke="#222" stroke-width="1.4"/>
 <rect x="1810.5" y="1054" width="1.5" height="4" fill="#222"/>
 <rect x="1799" y="1053.5" width="9" height="5" fill="#222"/>
 <path d="M1798 1048l-1.5 4h3z" fill="#222"/>
 <text x="1848.5" y="1052" font-size="11.5" fill="#222">16:50</text>
 <text x="1828" y="1068" font-size="11.5" fill="#222" letter-spacing="0.5">2024/4/1</text>
 <path d="M1886 1061c2-2 2-4 2-7a5 5 0 0 1 10 0c0 3 0 5 2 7z" fill="#222"/>
 <path d="M1891 1063h4a2 2 0 0 1-4 0z" fill="#222"/>
 <text x="1890" y="1059" font-size="6" fill="#fff" font-weight="bold">z</text>
 <text x="1896" y="1051" font-size="6" fill="#222" font-weight="bold">z</text>
</svg>
</body></html>
